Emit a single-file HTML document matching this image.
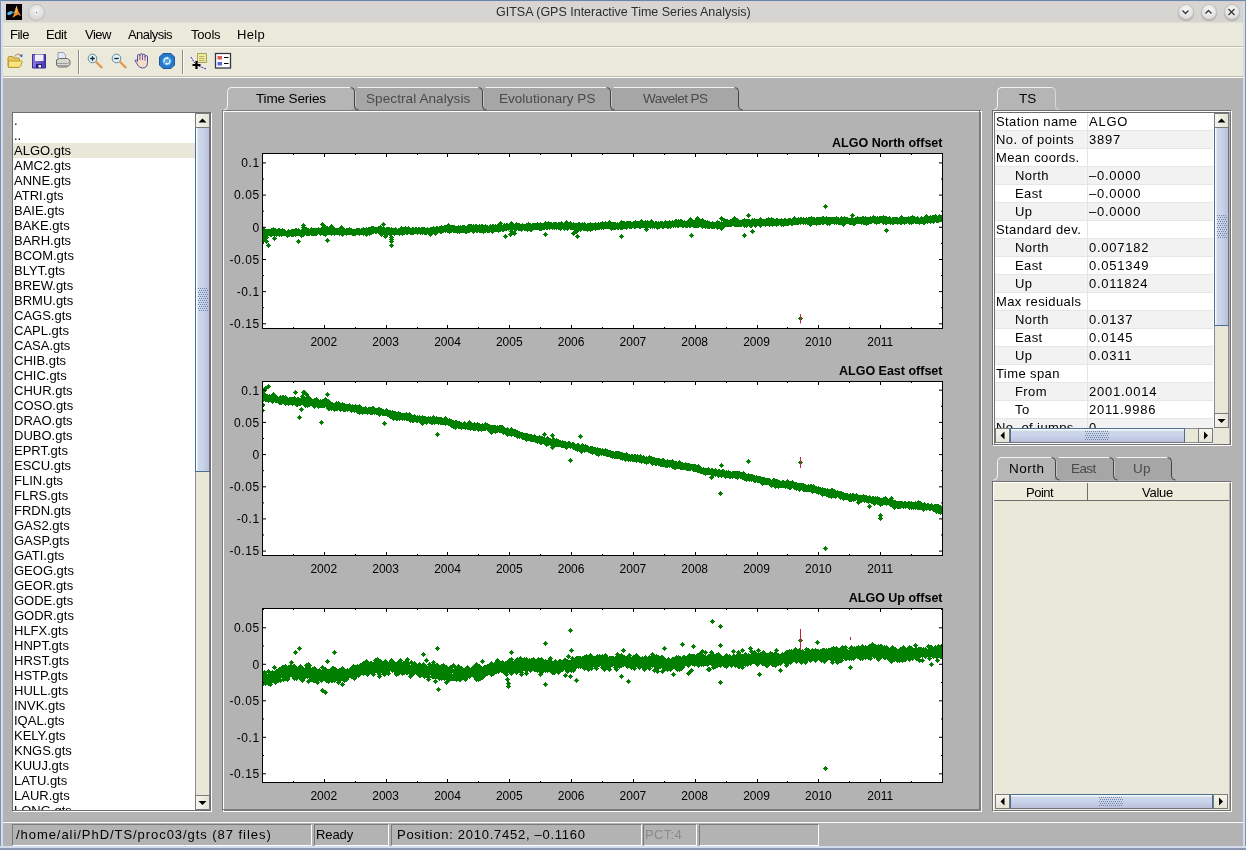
<!DOCTYPE html><html><head><meta charset="utf-8"><style>
*{margin:0;padding:0;box-sizing:border-box}
html,body{width:1246px;height:850px;overflow:hidden;background:#b3b3b3;font-family:"Liberation Sans", sans-serif}
.a{position:absolute}
.t{position:absolute;will-change:transform;white-space:pre;line-height:1;font-family:"Liberation Sans", sans-serif}
</style></head><body>

<div class="a" style="left:0;top:0;width:1246px;height:23px;background:linear-gradient(#6a87a8 0,#6a87a8 1px,#c4d2e4 1px,#dcd2cf 2px,#dcd4d0 4px,#d6d6d3 6px,#d4d3cf 21px,#e2e0d6 23px)"></div>
<div class="a" style="left:0;top:23px;width:1246px;height:55px;background:#eae9da"></div>
<div class="a" style="left:3px;top:46px;width:1240px;height:1px;background:#bebdaf"></div>
<div class="a" style="left:3px;top:47px;width:1240px;height:1px;background:#fbfaf0"></div>
<div class="a" style="left:3px;top:76px;width:1240px;height:1px;background:#bdbcb0"></div>
<div class="a" style="left:3px;top:77px;width:1240px;height:1px;background:#fdfdf8"></div>
<div class="a" style="left:0;top:0;width:1px;height:850px;background:#7e92b4"></div>
<div class="a" style="left:1px;top:1px;width:2px;height:849px;background:#d4dcec"></div>
<div class="a" style="left:1243px;top:1px;width:2px;height:849px;background:#d4dcec"></div>
<div class="a" style="left:1245px;top:0;width:1px;height:850px;background:#7e92b4"></div>
<div class="a" style="left:0;top:846px;width:1246px;height:2px;background:#d4dcec"></div>
<div class="a" style="left:0;top:848px;width:1246px;height:2px;background:#8a96b4"></div>
<svg class="a" style="left:6px;top:4px" width="16" height="16" viewBox="0 0 16 16">
<rect width="16" height="16" fill="#060208"/>
<defs><linearGradient id="mlg" x1="0" y1="0" x2="0" y2="1"><stop offset="0" stop-color="#ffd060"/><stop offset="0.5" stop-color="#f08028"/><stop offset="1" stop-color="#e8a030"/></linearGradient></defs>
<ellipse cx="4" cy="9" rx="3" ry="1.7" transform="rotate(-25 4 9)" fill="#58b0e8"/>
<path d="M5 9.5 L8.5 7 L9 9 Z" fill="#3a80a8"/>
<path d="M6.5 13.8 L8.5 8.5 L10.5 1.5 L12.5 7.5 L15 12 L12 10.5 Z" fill="url(#mlg)"/>
<path d="M8.5 8.5 L10.5 1.5 L11 9 Z" fill="#ffc848" opacity="0.7"/>
</svg>
<div class="a" style="left:29px;top:5px;width:15px;height:15px;border-radius:50%;background:radial-gradient(circle at 50% 35%,#f4f4f4,#d8d8d8 70%,#b8b8b8);box-shadow:0 0 0 1px #c0c0c0"></div>
<div class="a" style="left:36px;top:12px;width:1px;height:1px;background:#666"></div>
<div class="t" style="left:495.80px;top:5.62px;font-size:12.5px;color:#2e2e2e;letter-spacing:-0.009px;">GITSA (GPS Interactive Time Series Analysis)</div>
<div class="a" style="left:1178.5px;top:5px;width:14px;height:14px;border-radius:50%;background:radial-gradient(circle at 50% 35%,#fafafa,#e0e0e0 65%,#bdbdbd);box-shadow:0 0 0 1px #c4c4c4,0 1px 1px 1px #a8a8a8"></div>
<div class="a" style="left:1201.5px;top:5px;width:14px;height:14px;border-radius:50%;background:radial-gradient(circle at 50% 35%,#fafafa,#e0e0e0 65%,#bdbdbd);box-shadow:0 0 0 1px #c4c4c4,0 1px 1px 1px #a8a8a8"></div>
<div class="a" style="left:1224.5px;top:5px;width:14px;height:14px;border-radius:50%;background:radial-gradient(circle at 50% 35%,#fafafa,#e0e0e0 65%,#bdbdbd);box-shadow:0 0 0 1px #c4c4c4,0 1px 1px 1px #a8a8a8"></div>
<svg class="a" style="left:1178px;top:4px" width="62" height="16">
<path d="M4.5 6.5 L7.5 9.5 L10.5 6.5" stroke="#333" stroke-width="1.25" fill="none"/>
<path d="M27.5 9.5 L30.5 6.5 L33.5 9.5" stroke="#333" stroke-width="1.25" fill="none"/>
<path d="M50.5 5 L56.5 11 M56.5 5 L50.5 11" stroke="#333" stroke-width="1.25" fill="none"/>
</svg>
<div class="t" style="left:10.20px;top:28.00px;font-size:13px;color:#000;letter-spacing:-0.506px;">File</div>
<div class="t" style="left:45.60px;top:28.00px;font-size:13px;color:#000;letter-spacing:-0.396px;">Edit</div>
<div class="t" style="left:84.80px;top:28.00px;font-size:13px;color:#000;letter-spacing:-0.518px;">View</div>
<div class="t" style="left:128.30px;top:28.00px;font-size:13px;color:#000;letter-spacing:-0.558px;">Analysis</div>
<div class="t" style="left:191.30px;top:28.00px;font-size:13px;color:#000;letter-spacing:-0.187px;">Tools</div>
<div class="t" style="left:237.10px;top:28.00px;font-size:13px;color:#000;letter-spacing:0.298px;">Help</div>
<div class="a" style="left:78px;top:50px;width:1px;height:24px;background:#8d8c80"></div>
<div class="a" style="left:79px;top:50px;width:1px;height:24px;background:#fafaf0"></div>
<div class="a" style="left:182px;top:50px;width:1px;height:24px;background:#8d8c80"></div>
<div class="a" style="left:183px;top:50px;width:1px;height:24px;background:#fafaf0"></div>
<svg class="a" style="left:0;top:48px" width="240" height="26" viewBox="0 48 240 26">
<!-- open folder -->
<path d="M8 58 q0-1.5 1.5-1.5 h3 l1.5 1.5 h4 q1.5 0 1.5 1.5 v6.5 q0 1.5-1.5 1.5 h-8.5 q-1.5 0-1.5-1.5z" fill="#e8c858" stroke="#b49230" stroke-width="1"/>
<path d="M8.5 61 h13 q1 0 0.6 1 l-1.6 4.3 q-0.4 1-1.4 1 h-10.6z" fill="#f8e480" stroke="#b8982c" stroke-width="0.9"/>
<path d="M14.5 56.5 q2.5-3.5 6-1.8" fill="none" stroke="#d09080" stroke-width="1.2"/>
<path d="M22.5 54 l-0.3 3.5 l-3-1.8z" fill="#2a68b8"/>
<!-- floppy -->
<defs><linearGradient id="fpg" x1="0" x2="1"><stop offset="0" stop-color="#8a7ce0"/><stop offset="1" stop-color="#4838a8"/></linearGradient></defs>
<path d="M32.5 54.5 h13 v13.5 h-13z" fill="url(#fpg)" stroke="#3c2c98" stroke-width="1"/>
<path d="M35 54.5 h8.5 v6.5 h-8.5z" fill="#f0f0fa"/>
<path d="M36 64 h6 v4 h-6z" fill="#281c78"/>
<path d="M38.5 65 h2.5 v2.5 h-2.5z" fill="#f0f0ff"/>
<!-- printer -->
<path d="M58 52.5 h5.5 l2 2.5 v5 h-7.5z" fill="#e4e8f8" stroke="#9098b0" stroke-width="0.9"/>
<path d="M56.5 60 l3-1.5 h8 l2.5 2 v4 l-3 2.5 h-8.5 l-2-2z" fill="#d8d8d2" stroke="#6a6a6a" stroke-width="1"/>
<path d="M57 63.5 h10.5 l2-1.5 M57 65.5 h10.5" stroke="#8a8a8a" stroke-width="0.8" fill="none"/>
<!-- zoom in -->
<circle cx="92.5" cy="58.5" r="4.3" fill="#e4f2f8" stroke="#5a8aa0" stroke-width="1"/>
<path d="M90.2 58.5 h4.6 M92.5 56.2 v4.6" stroke="#102838" stroke-width="1.3"/>
<path d="M96.2 62 l5.3 5.3" stroke="#e09848" stroke-width="2.2" stroke-linecap="round"/>
<!-- zoom out -->
<circle cx="116.5" cy="58.5" r="4.3" fill="#e4f2f8" stroke="#5a8aa0" stroke-width="1"/>
<path d="M114.2 58.5 h4.6" stroke="#102838" stroke-width="1.3"/>
<path d="M120.2 62 l5.3 5.3" stroke="#e09848" stroke-width="2.2" stroke-linecap="round"/>
<!-- hand -->
<g transform="translate(134.5 52.5)">
<path d="M3 9 L3 3.2 Q3 2 4.2 2 Q5.4 2 5.4 3.2 L5.4 2.4 Q5.4 1.2 6.7 1.2 Q8 1.2 8 2.4 L8 2.7 Q8 1.6 9.2 1.6 Q10.5 1.6 10.5 2.8 L10.5 4.2 Q10.5 3.1 11.7 3.1 Q13 3.1 13 4.2 L13 10 Q13 15.5 8 15.5 Q5 15.5 3.6 13 L0.8 8.6 Q0.3 7.4 1.5 7.4 Q2.3 7.4 3 8.6 Z" fill="#f4dcc6" stroke="#4a3a9a" stroke-width="0.9"/>
<path d="M5.4 3.2 V7.5 M8 2.7 V7.5 M10.5 4.2 V8" stroke="#4a3a9a" stroke-width="0.8" fill="none"/>
</g>
<!-- rotate 3d -->
<path d="M163 53.5 h8 l3.5 3.5 v8 l-3.5 3.5 h-8 l-3.5 -3.5 v-8z" fill="#2878c8" stroke="#1858a0" stroke-width="1"/>
<circle cx="167" cy="61" r="4.6" fill="#48a0e8"/>
<path d="M164.3 62.5 a3 3 0 0 1 3.5-4.3 M169.7 59.5 a3 3 0 0 1 -3.5 4.3" fill="none" stroke="#f4faff" stroke-width="1.3"/>
<path d="M167 56.8 l2.2 1.6 l-2.4 1.2z M167 65.2 l-2.2-1.6 l2.4-1.2z" fill="#f4faff"/>
<!-- data cursor -->
<path d="M197.5 53.5 h9 v9 h-9z" fill="#f0ec98" stroke="#a8a060"/>
<path d="M199 56.5 h5.5 M199 58.5 h5.5 M199 60.5 h5.5" stroke="#a09860" stroke-width="0.7"/>
<path d="M191 57 l3 5 l3 3 l4 2 l5 2" fill="none" stroke="#3020c0" stroke-width="1" stroke-dasharray="2 1"/>
<path d="M196.5 61 v8 M192.5 65 h8" stroke="#000" stroke-width="2.2"/>
<!-- legend -->
<rect x="215.5" y="53.5" width="15" height="14.5" fill="#fff" stroke="#303848" stroke-width="1.3"/>
<rect x="217.5" y="56" width="4.5" height="3.5" fill="#e05858"/>
<rect x="217.5" y="62" width="4.5" height="3.5" fill="#5a68d8"/>
<path d="M224 57.5 h4.5 M224 63.5 h4.5" stroke="#000" stroke-width="1.2"/>
</svg>

<div class="a" style="left:12px;top:112px;width:200px;height:700px;background:#fff;border-top:1px solid #6e6e6e;border-left:1px solid #6e6e6e;border-right:1px solid #fff;border-bottom:1px solid #fff"></div>
<div class="a" style="left:210px;top:112px;width:1px;height:699px;background:#6e6e6e"></div>
<div class="a" style="left:12px;top:810px;width:199px;height:1px;background:#6e6e6e"></div>
<div class="a" style="left:13px;top:143px;width:182px;height:15px;background:#e8e7d8"></div>
<div class="a" style="left:13px;top:113px;width:182px;height:697px;overflow:hidden">
<div class="t" style="left:1px;top:1px;font-size:13px">.</div>
<div class="t" style="left:1px;top:16px;font-size:13px">..</div>
<div class="t" style="left:1px;top:31px;font-size:13px">ALGO.gts</div>
<div class="t" style="left:1px;top:46px;font-size:13px">AMC2.gts</div>
<div class="t" style="left:1px;top:61px;font-size:13px">ANNE.gts</div>
<div class="t" style="left:1px;top:76px;font-size:13px">ATRI.gts</div>
<div class="t" style="left:1px;top:91px;font-size:13px">BAIE.gts</div>
<div class="t" style="left:1px;top:106px;font-size:13px">BAKE.gts</div>
<div class="t" style="left:1px;top:121px;font-size:13px">BARH.gts</div>
<div class="t" style="left:1px;top:136px;font-size:13px">BCOM.gts</div>
<div class="t" style="left:1px;top:151px;font-size:13px">BLYT.gts</div>
<div class="t" style="left:1px;top:166px;font-size:13px">BREW.gts</div>
<div class="t" style="left:1px;top:181px;font-size:13px">BRMU.gts</div>
<div class="t" style="left:1px;top:196px;font-size:13px">CAGS.gts</div>
<div class="t" style="left:1px;top:211px;font-size:13px">CAPL.gts</div>
<div class="t" style="left:1px;top:226px;font-size:13px">CASA.gts</div>
<div class="t" style="left:1px;top:241px;font-size:13px">CHIB.gts</div>
<div class="t" style="left:1px;top:256px;font-size:13px">CHIC.gts</div>
<div class="t" style="left:1px;top:271px;font-size:13px">CHUR.gts</div>
<div class="t" style="left:1px;top:286px;font-size:13px">COSO.gts</div>
<div class="t" style="left:1px;top:301px;font-size:13px">DRAO.gts</div>
<div class="t" style="left:1px;top:316px;font-size:13px">DUBO.gts</div>
<div class="t" style="left:1px;top:331px;font-size:13px">EPRT.gts</div>
<div class="t" style="left:1px;top:346px;font-size:13px">ESCU.gts</div>
<div class="t" style="left:1px;top:361px;font-size:13px">FLIN.gts</div>
<div class="t" style="left:1px;top:376px;font-size:13px">FLRS.gts</div>
<div class="t" style="left:1px;top:391px;font-size:13px">FRDN.gts</div>
<div class="t" style="left:1px;top:406px;font-size:13px">GAS2.gts</div>
<div class="t" style="left:1px;top:421px;font-size:13px">GASP.gts</div>
<div class="t" style="left:1px;top:436px;font-size:13px">GATI.gts</div>
<div class="t" style="left:1px;top:451px;font-size:13px">GEOG.gts</div>
<div class="t" style="left:1px;top:466px;font-size:13px">GEOR.gts</div>
<div class="t" style="left:1px;top:481px;font-size:13px">GODE.gts</div>
<div class="t" style="left:1px;top:496px;font-size:13px">GODR.gts</div>
<div class="t" style="left:1px;top:511px;font-size:13px">HLFX.gts</div>
<div class="t" style="left:1px;top:526px;font-size:13px">HNPT.gts</div>
<div class="t" style="left:1px;top:541px;font-size:13px">HRST.gts</div>
<div class="t" style="left:1px;top:556px;font-size:13px">HSTP.gts</div>
<div class="t" style="left:1px;top:571px;font-size:13px">HULL.gts</div>
<div class="t" style="left:1px;top:586px;font-size:13px">INVK.gts</div>
<div class="t" style="left:1px;top:601px;font-size:13px">IQAL.gts</div>
<div class="t" style="left:1px;top:616px;font-size:13px">KELY.gts</div>
<div class="t" style="left:1px;top:631px;font-size:13px">KNGS.gts</div>
<div class="t" style="left:1px;top:646px;font-size:13px">KUUJ.gts</div>
<div class="t" style="left:1px;top:661px;font-size:13px">LATU.gts</div>
<div class="t" style="left:1px;top:676px;font-size:13px">LAUR.gts</div>
<div class="t" style="left:1px;top:691px;font-size:13px">LONG.gts</div>
</div>
<div class="a" style="left:195px;top:113px;width:15px;height:697px;background:#e8e7d8;border-left:1px solid #8c8c8c;border-right:1px solid #8c8c8c"></div>
<div class="a" style="left:195px;top:113px;width:15px;height:15px;background:linear-gradient(90deg,#f6f6ef,#e4e3d5);border:1px solid #7a7a7a"></div>
<svg class="a" style="left:195px;top:113px" width="15" height="15"><path d="M3.5 9.5 L7.5 5.5 L11.5 9.5Z" fill="#000"/></svg>
<div class="a" style="left:195px;top:795px;width:15px;height:15px;background:linear-gradient(90deg,#f6f6ef,#e4e3d5);border:1px solid #7a7a7a"></div>
<svg class="a" style="left:195px;top:795px" width="15" height="15"><path d="M3.5 6 L7.5 10 L11.5 6Z" fill="#000"/></svg>
<div class="a" style="left:195px;top:128px;width:15px;height:344px;background:linear-gradient(90deg,#f4faff 0,#f4faff 1px,#d0d8e4 2px,#c8d4ec 50%,#bcc0d8);border-left:1px solid #4a6e94;border-right:1px solid #6e7284;border-bottom:1px solid #4a6e94"></div>
<svg class="a" style="left:198px;top:288px" width="11" height="24"><rect x="0" y="0" width="1" height="1" fill="#6f86a8"/><rect x="2" y="0" width="1" height="1" fill="#6f86a8"/><rect x="4" y="0" width="1" height="1" fill="#6f86a8"/><rect x="6" y="0" width="1" height="1" fill="#6f86a8"/><rect x="8" y="0" width="1" height="1" fill="#6f86a8"/><rect x="1" y="2" width="1" height="1" fill="#6f86a8"/><rect x="3" y="2" width="1" height="1" fill="#6f86a8"/><rect x="5" y="2" width="1" height="1" fill="#6f86a8"/><rect x="7" y="2" width="1" height="1" fill="#6f86a8"/><rect x="9" y="2" width="1" height="1" fill="#6f86a8"/><rect x="0" y="4" width="1" height="1" fill="#6f86a8"/><rect x="2" y="4" width="1" height="1" fill="#6f86a8"/><rect x="4" y="4" width="1" height="1" fill="#6f86a8"/><rect x="6" y="4" width="1" height="1" fill="#6f86a8"/><rect x="8" y="4" width="1" height="1" fill="#6f86a8"/><rect x="1" y="6" width="1" height="1" fill="#6f86a8"/><rect x="3" y="6" width="1" height="1" fill="#6f86a8"/><rect x="5" y="6" width="1" height="1" fill="#6f86a8"/><rect x="7" y="6" width="1" height="1" fill="#6f86a8"/><rect x="9" y="6" width="1" height="1" fill="#6f86a8"/><rect x="0" y="8" width="1" height="1" fill="#6f86a8"/><rect x="2" y="8" width="1" height="1" fill="#6f86a8"/><rect x="4" y="8" width="1" height="1" fill="#6f86a8"/><rect x="6" y="8" width="1" height="1" fill="#6f86a8"/><rect x="8" y="8" width="1" height="1" fill="#6f86a8"/><rect x="1" y="10" width="1" height="1" fill="#6f86a8"/><rect x="3" y="10" width="1" height="1" fill="#6f86a8"/><rect x="5" y="10" width="1" height="1" fill="#6f86a8"/><rect x="7" y="10" width="1" height="1" fill="#6f86a8"/><rect x="9" y="10" width="1" height="1" fill="#6f86a8"/><rect x="0" y="12" width="1" height="1" fill="#6f86a8"/><rect x="2" y="12" width="1" height="1" fill="#6f86a8"/><rect x="4" y="12" width="1" height="1" fill="#6f86a8"/><rect x="6" y="12" width="1" height="1" fill="#6f86a8"/><rect x="8" y="12" width="1" height="1" fill="#6f86a8"/><rect x="1" y="14" width="1" height="1" fill="#6f86a8"/><rect x="3" y="14" width="1" height="1" fill="#6f86a8"/><rect x="5" y="14" width="1" height="1" fill="#6f86a8"/><rect x="7" y="14" width="1" height="1" fill="#6f86a8"/><rect x="9" y="14" width="1" height="1" fill="#6f86a8"/><rect x="0" y="16" width="1" height="1" fill="#6f86a8"/><rect x="2" y="16" width="1" height="1" fill="#6f86a8"/><rect x="4" y="16" width="1" height="1" fill="#6f86a8"/><rect x="6" y="16" width="1" height="1" fill="#6f86a8"/><rect x="8" y="16" width="1" height="1" fill="#6f86a8"/><rect x="1" y="18" width="1" height="1" fill="#6f86a8"/><rect x="3" y="18" width="1" height="1" fill="#6f86a8"/><rect x="5" y="18" width="1" height="1" fill="#6f86a8"/><rect x="7" y="18" width="1" height="1" fill="#6f86a8"/><rect x="9" y="18" width="1" height="1" fill="#6f86a8"/><rect x="0" y="20" width="1" height="1" fill="#6f86a8"/><rect x="2" y="20" width="1" height="1" fill="#6f86a8"/><rect x="4" y="20" width="1" height="1" fill="#6f86a8"/><rect x="6" y="20" width="1" height="1" fill="#6f86a8"/><rect x="8" y="20" width="1" height="1" fill="#6f86a8"/><rect x="1" y="22" width="1" height="1" fill="#6f86a8"/><rect x="3" y="22" width="1" height="1" fill="#6f86a8"/><rect x="5" y="22" width="1" height="1" fill="#6f86a8"/><rect x="7" y="22" width="1" height="1" fill="#6f86a8"/><rect x="9" y="22" width="1" height="1" fill="#6f86a8"/></svg>
<div class="a" style="left:222px;top:110px;width:759px;height:701px;border:1px solid #7a7a7a"></div>
<div class="a" style="left:223px;top:111px;width:759px;height:701px;border:1px solid #fff;border-right-color:#fff"></div>
<div class="a" style="left:223px;top:111px;width:757px;height:699px;border-right:1px solid #7a7a7a;border-bottom:1px solid #7a7a7a"></div>
<svg class="a" style="left:0;top:0;overflow:visible" width="1246" height="850">
<path d="M223 110 Q227 110 227 106 V91 Q227 87 231 87 H350 Q354 87 354 91 V106 Q354 110 358 110Z" fill="#b5b5b5"/>
<path d="M350 110 Q354 110 354 106 V91 Q354 87 358 87 H478 Q482 87 482 91 V106 Q482 110 486 110Z" fill="#a6a6a6"/>
<path d="M478 110 Q482 110 482 106 V91 Q482 87 486 87 H606 Q610 87 610 91 V106 Q610 110 614 110Z" fill="#a6a6a6"/>
<path d="M606 110 Q610 110 610 106 V91 Q610 87 614 87 H734 Q738 87 738 91 V106 Q738 110 742 110Z" fill="#a6a6a6"/>
<path d="M230.5 87.5 H351.5" stroke="#f2f2f2" fill="none"/>
<path d="M223.5 110 Q227.5 110 227.5 106 V91.5 Q227.5 87.5 231.5 87.5" stroke="#f4f4f4" fill="none"/>
<path d="M350.5 87.5 Q354.5 87.5 354.5 91.5 V106 Q354.5 110 358.5 110" stroke="#444" fill="none"/>
<path d="M357.5 87.5 H479.5" stroke="#f2f2f2" fill="none"/>
<path d="M355.5 91.5 V106" stroke="#c4c4c4" fill="none"/>
<path d="M478.5 87.5 Q482.5 87.5 482.5 91.5 V106 Q482.5 110 486.5 110" stroke="#444" fill="none"/>
<path d="M485.5 87.5 H607.5" stroke="#f2f2f2" fill="none"/>
<path d="M483.5 91.5 V106" stroke="#c4c4c4" fill="none"/>
<path d="M606.5 87.5 Q610.5 87.5 610.5 91.5 V106 Q610.5 110 614.5 110" stroke="#444" fill="none"/>
<path d="M613.5 87.5 H735.5" stroke="#f2f2f2" fill="none"/>
<path d="M611.5 91.5 V106" stroke="#c4c4c4" fill="none"/>
<path d="M734.5 87.5 Q738.5 87.5 738.5 91.5 V106 Q738.5 110 742.5 110" stroke="#444" fill="none"/>
</svg>
<div class="t" style="left:256.20px;top:91.97px;font-size:13.5px;color:#000;letter-spacing:-0.146px;">Time Series</div>
<div class="t" style="left:366.30px;top:91.97px;font-size:13.5px;color:#4a4a4a;letter-spacing:0.094px;">Spectral Analysis</div>
<div class="t" style="left:498.60px;top:91.97px;font-size:13.5px;color:#4a4a4a;letter-spacing:0.025px;">Evolutionary PS</div>
<div class="t" style="left:642.60px;top:91.97px;font-size:13.5px;color:#4a4a4a;letter-spacing:-0.558px;">Wavelet PS</div>
<svg class="a" style="left:0;top:0;will-change:transform" width="1246" height="850" font-family="Liberation Sans" font-size="12">
<rect x="262" y="153" width="680" height="175" fill="#fff"/>
<path d="M825 204h1v1h-1zM824 205h3v1h-3zM823 206h5v1h-5zM824 207h3v1h-3zM825 208h1v1h-1zM748 213h1v1h-1zM852 213h1v1h-1zM747 214h3v1h-3zM851 214h3v1h-3zM926 214h1v1h-1zM935 214h1v1h-1zM939 214h1v1h-1zM746 215h5v1h-5zM850 215h5v1h-5zM873 215h1v1h-1zM883 215h1v1h-1zM901 215h1v1h-1zM912 215h1v1h-1zM925 215h3v1h-3zM930 215h1v1h-1zM932 215h5v1h-5zM938 215h4v1h-4zM697 216h1v1h-1zM721 216h1v1h-1zM734 216h1v1h-1zM747 216h3v1h-3zM794 216h1v1h-1zM811 216h1v1h-1zM822 216h2v1h-2zM826 216h1v1h-1zM836 216h1v1h-1zM841 216h1v1h-1zM844 216h1v1h-1zM851 216h3v1h-3zM857 216h1v1h-1zM862 216h2v1h-2zM865 216h1v1h-1zM870 216h1v1h-1zM872 216h4v1h-4zM877 216h1v1h-1zM879 216h8v1h-8zM889 216h1v1h-1zM900 216h3v1h-3zM908 216h1v1h-1zM910 216h5v1h-5zM917 216h1v1h-1zM921 216h1v1h-1zM924 216h19v1h-19zM690 217h1v1h-1zM696 217h3v1h-3zM720 217h3v1h-3zM733 217h3v1h-3zM748 217h1v1h-1zM760 217h1v1h-1zM768 217h1v1h-1zM771 217h1v1h-1zM793 217h3v1h-3zM798 217h1v1h-1zM800 217h2v1h-2zM803 217h1v1h-1zM806 217h1v1h-1zM808 217h7v1h-7zM816 217h23v1h-23zM840 217h8v1h-8zM851 217h2v1h-2zM855 217h36v1h-36zM892 217h6v1h-6zM899 217h20v1h-20zM920 217h23v1h-23zM689 218h3v1h-3zM695 218h5v1h-5zM702 218h1v1h-1zM719 218h6v1h-6zM732 218h6v1h-6zM744 218h1v1h-1zM752 218h1v1h-1zM754 218h1v1h-1zM759 218h3v1h-3zM766 218h8v1h-8zM776 218h2v1h-2zM781 218h1v1h-1zM784 218h2v1h-2zM788 218h3v1h-3zM792 218h151v1h-151zM641 219h1v1h-1zM651 219h1v1h-1zM675 219h2v1h-2zM678 219h1v1h-1zM680 219h2v1h-2zM688 219h5v1h-5zM695 219h9v1h-9zM720 219h8v1h-8zM730 219h9v1h-9zM742 219h8v1h-8zM751 219h192v1h-192zM566 220h1v1h-1zM609 220h1v1h-1zM621 220h1v1h-1zM635 220h1v1h-1zM640 220h3v1h-3zM645 220h1v1h-1zM647 220h1v1h-1zM650 220h3v1h-3zM665 220h1v1h-1zM669 220h1v1h-1zM672 220h1v1h-1zM674 220h9v1h-9zM684 220h1v1h-1zM687 220h19v1h-19zM707 220h1v1h-1zM717 220h1v1h-1zM721 220h222v1h-222zM500 221h1v1h-1zM511 221h1v1h-1zM545 221h1v1h-1zM548 221h1v1h-1zM561 221h1v1h-1zM565 221h3v1h-3zM570 221h1v1h-1zM602 221h1v1h-1zM605 221h1v1h-1zM608 221h3v1h-3zM620 221h5v1h-5zM626 221h5v1h-5zM633 221h21v1h-21zM655 221h2v1h-2zM658 221h1v1h-1zM660 221h3v1h-3zM664 221h46v1h-46zM712 221h1v1h-1zM716 221h4v1h-4zM721 221h1v1h-1zM723 221h219v1h-219zM322 222h1v1h-1zM383 222h1v1h-1zM499 222h3v1h-3zM510 222h3v1h-3zM516 222h1v1h-1zM528 222h1v1h-1zM537 222h1v1h-1zM540 222h1v1h-1zM544 222h8v1h-8zM553 222h4v1h-4zM558 222h5v1h-5zM564 222h8v1h-8zM573 222h1v1h-1zM578 222h2v1h-2zM582 222h1v1h-1zM584 222h1v1h-1zM590 222h1v1h-1zM595 222h1v1h-1zM598 222h1v1h-1zM600 222h16v1h-16zM617 222h1v1h-1zM619 222h316v1h-316zM936 222h3v1h-3zM303 223h1v1h-1zM321 223h3v1h-3zM382 223h3v1h-3zM448 223h1v1h-1zM498 223h5v1h-5zM504 223h1v1h-1zM506 223h2v1h-2zM509 223h5v1h-5zM515 223h5v1h-5zM522 223h1v1h-1zM526 223h5v1h-5zM532 223h54v1h-54zM587 223h285v1h-285zM874 223h6v1h-6zM882 223h25v1h-25zM908 223h6v1h-6zM915 223h11v1h-11zM927 223h1v1h-1zM930 223h1v1h-1zM933 223h1v1h-1zM302 224h3v1h-3zM320 224h5v1h-5zM331 224h1v1h-1zM381 224h5v1h-5zM447 224h3v1h-3zM468 224h4v1h-4zM473 224h1v1h-1zM475 224h2v1h-2zM479 224h1v1h-1zM481 224h2v1h-2zM485 224h1v1h-1zM490 224h1v1h-1zM492 224h2v1h-2zM495 224h1v1h-1zM497 224h5v1h-5zM503 224h296v1h-296zM800 224h1v1h-1zM803 224h1v1h-1zM805 224h1v1h-1zM807 224h14v1h-14zM822 224h2v1h-2zM826 224h5v1h-5zM834 224h1v1h-1zM836 224h1v1h-1zM838 224h8v1h-8zM849 224h7v1h-7zM861 224h1v1h-1zM863 224h6v1h-6zM876 224h1v1h-1zM883 224h1v1h-1zM885 224h2v1h-2zM890 224h1v1h-1zM892 224h2v1h-2zM897 224h1v1h-1zM900 224h2v1h-2zM904 224h1v1h-1zM909 224h1v1h-1zM911 224h1v1h-1zM919 224h1v1h-1zM923 224h2v1h-2zM301 225h5v1h-5zM321 225h5v1h-5zM330 225h3v1h-3zM341 225h1v1h-1zM380 225h1v1h-1zM382 225h3v1h-3zM441 225h1v1h-1zM444 225h11v1h-11zM458 225h1v1h-1zM460 225h1v1h-1zM462 225h3v1h-3zM467 225h21v1h-21zM489 225h290v1h-290zM780 225h9v1h-9zM791 225h2v1h-2zM809 225h3v1h-3zM816 225h1v1h-1zM827 225h1v1h-1zM829 225h1v1h-1zM842 225h3v1h-3zM853 225h2v1h-2zM866 225h1v1h-1zM262 226h1v1h-1zM302 226h3v1h-3zM322 226h6v1h-6zM329 226h5v1h-5zM340 226h3v1h-3zM371 226h3v1h-3zM378 226h4v1h-4zM383 226h1v1h-1zM401 226h1v1h-1zM405 226h1v1h-1zM408 226h1v1h-1zM433 226h1v1h-1zM436 226h2v1h-2zM439 226h293v1h-293zM734 226h8v1h-8zM743 226h5v1h-5zM749 226h4v1h-4zM754 226h3v1h-3zM759 226h3v1h-3zM765 226h1v1h-1zM769 226h1v1h-1zM772 226h1v1h-1zM776 226h1v1h-1zM781 226h1v1h-1zM783 226h1v1h-1zM810 226h1v1h-1zM843 226h1v1h-1zM262 227h2v1h-2zM273 227h1v1h-1zM301 227h6v1h-6zM311 227h1v1h-1zM318 227h1v1h-1zM321 227h14v1h-14zM339 227h5v1h-5zM349 227h1v1h-1zM363 227h1v1h-1zM366 227h1v1h-1zM368 227h17v1h-17zM386 227h4v1h-4zM391 227h1v1h-1zM395 227h1v1h-1zM400 227h10v1h-10zM412 227h2v1h-2zM415 227h2v1h-2zM418 227h2v1h-2zM421 227h4v1h-4zM427 227h1v1h-1zM430 227h242v1h-242zM673 227h1v1h-1zM675 227h1v1h-1zM677 227h2v1h-2zM682 227h2v1h-2zM685 227h3v1h-3zM689 227h2v1h-2zM693 227h6v1h-6zM701 227h24v1h-24zM744 227h1v1h-1zM746 227h1v1h-1zM750 227h2v1h-2zM755 227h1v1h-1zM760 227h1v1h-1zM262 228h3v1h-3zM271 228h5v1h-5zM278 228h2v1h-2zM282 228h1v1h-1zM295 228h2v1h-2zM298 228h1v1h-1zM302 228h7v1h-7zM310 228h35v1h-35zM346 228h6v1h-6zM356 228h4v1h-4zM361 228h36v1h-36zM398 228h230v1h-230zM629 228h3v1h-3zM634 228h2v1h-2zM639 228h2v1h-2zM645 228h3v1h-3zM650 228h1v1h-1zM652 228h1v1h-1zM654 228h1v1h-1zM656 228h4v1h-4zM662 228h2v1h-2zM667 228h2v1h-2zM670 228h1v1h-1zM702 228h1v1h-1zM705 228h1v1h-1zM707 228h3v1h-3zM711 228h4v1h-4zM716 228h8v1h-8zM886 228h1v1h-1zM262 229h23v1h-23zM288 229h1v1h-1zM291 229h9v1h-9zM301 229h244v1h-244zM546 229h2v1h-2zM549 229h1v1h-1zM552 229h1v1h-1zM554 229h1v1h-1zM556 229h1v1h-1zM558 229h4v1h-4zM563 229h6v1h-6zM570 229h30v1h-30zM601 229h1v1h-1zM603 229h1v1h-1zM610 229h6v1h-6zM617 229h2v1h-2zM620 229h3v1h-3zM626 229h1v1h-1zM644 229h5v1h-5zM657 229h1v1h-1zM717 229h1v1h-1zM720 229h3v1h-3zM752 229h1v1h-1zM885 229h3v1h-3zM262 230h24v1h-24zM287 230h220v1h-220zM508 230h1v1h-1zM510 230h3v1h-3zM514 230h3v1h-3zM518 230h5v1h-5zM524 230h9v1h-9zM539 230h3v1h-3zM560 230h1v1h-1zM564 230h1v1h-1zM567 230h1v1h-1zM574 230h8v1h-8zM583 230h10v1h-10zM595 230h1v1h-1zM611 230h1v1h-1zM645 230h3v1h-3zM721 230h1v1h-1zM751 230h3v1h-3zM884 230h5v1h-5zM262 231h239v1h-239zM502 231h2v1h-2zM509 231h7v1h-7zM521 231h1v1h-1zM527 231h1v1h-1zM530 231h2v1h-2zM573 231h6v1h-6zM580 231h1v1h-1zM587 231h1v1h-1zM590 231h1v1h-1zM646 231h1v1h-1zM750 231h5v1h-5zM885 231h3v1h-3zM262 232h182v1h-182zM445 232h1v1h-1zM447 232h5v1h-5zM453 232h17v1h-17zM472 232h3v1h-3zM476 232h2v1h-2zM479 232h7v1h-7zM487 232h3v1h-3zM491 232h3v1h-3zM498 232h1v1h-1zM510 232h6v1h-6zM545 232h1v1h-1zM572 232h6v1h-6zM751 232h3v1h-3zM886 232h1v1h-1zM262 233h112v1h-112zM375 233h2v1h-2zM378 233h60v1h-60zM440 233h2v1h-2zM449 233h1v1h-1zM457 233h1v1h-1zM459 233h1v1h-1zM465 233h2v1h-2zM473 233h1v1h-1zM483 233h1v1h-1zM492 233h1v1h-1zM509 233h8v1h-8zM544 233h3v1h-3zM571 233h6v1h-6zM691 233h1v1h-1zM744 233h1v1h-1zM752 233h1v1h-1zM262 234h56v1h-56zM319 234h53v1h-53zM379 234h26v1h-26zM406 234h2v1h-2zM410 234h4v1h-4zM417 234h1v1h-1zM420 234h1v1h-1zM422 234h1v1h-1zM424 234h3v1h-3zM428 234h5v1h-5zM434 234h3v1h-3zM505 234h1v1h-1zM508 234h8v1h-8zM543 234h5v1h-5zM572 234h3v1h-3zM577 234h1v1h-1zM621 234h1v1h-1zM690 234h3v1h-3zM743 234h3v1h-3zM262 235h43v1h-43zM306 235h4v1h-4zM311 235h6v1h-6zM320 235h1v1h-1zM323 235h4v1h-4zM331 235h1v1h-1zM334 235h1v1h-1zM339 235h1v1h-1zM341 235h3v1h-3zM346 235h1v1h-1zM352 235h4v1h-4zM359 235h1v1h-1zM363 235h1v1h-1zM365 235h3v1h-3zM369 235h1v1h-1zM380 235h3v1h-3zM384 235h4v1h-4zM389 235h3v1h-3zM394 235h1v1h-1zM399 235h1v1h-1zM402 235h1v1h-1zM429 235h3v1h-3zM435 235h1v1h-1zM504 235h3v1h-3zM509 235h3v1h-3zM514 235h1v1h-1zM544 235h3v1h-3zM573 235h1v1h-1zM576 235h3v1h-3zM620 235h3v1h-3zM689 235h5v1h-5zM742 235h5v1h-5zM262 236h6v1h-6zM270 236h2v1h-2zM274 236h1v1h-1zM276 236h1v1h-1zM279 236h1v1h-1zM281 236h1v1h-1zM286 236h4v1h-4zM291 236h3v1h-3zM295 236h1v1h-1zM300 236h4v1h-4zM325 236h1v1h-1zM342 236h1v1h-1zM366 236h1v1h-1zM381 236h1v1h-1zM383 236h5v1h-5zM390 236h3v1h-3zM430 236h1v1h-1zM503 236h5v1h-5zM510 236h1v1h-1zM545 236h1v1h-1zM575 236h5v1h-5zM619 236h5v1h-5zM690 236h3v1h-3zM743 236h3v1h-3zM262 237h7v1h-7zM273 237h3v1h-3zM287 237h1v1h-1zM301 237h1v1h-1zM384 237h3v1h-3zM389 237h5v1h-5zM504 237h3v1h-3zM576 237h3v1h-3zM620 237h3v1h-3zM691 237h1v1h-1zM744 237h1v1h-1zM262 238h6v1h-6zM272 238h5v1h-5zM327 238h1v1h-1zM385 238h1v1h-1zM390 238h3v1h-3zM505 238h1v1h-1zM577 238h1v1h-1zM621 238h1v1h-1zM262 239h5v1h-5zM273 239h3v1h-3zM298 239h1v1h-1zM326 239h3v1h-3zM389 239h5v1h-5zM262 240h6v1h-6zM274 240h1v1h-1zM297 240h3v1h-3zM325 240h5v1h-5zM390 240h3v1h-3zM262 241h7v1h-7zM296 241h5v1h-5zM326 241h3v1h-3zM389 241h5v1h-5zM263 242h1v1h-1zM265 242h3v1h-3zM297 242h3v1h-3zM327 242h1v1h-1zM390 242h3v1h-3zM266 243h1v1h-1zM268 243h1v1h-1zM298 243h1v1h-1zM391 243h1v1h-1zM267 244h3v1h-3zM390 244h3v1h-3zM266 245h5v1h-5zM389 245h5v1h-5zM267 246h3v1h-3zM390 246h3v1h-3zM268 247h1v1h-1zM391 247h1v1h-1zM800 316h1v1h-1zM799 317h3v1h-3zM798 318h5v1h-5zM799 319h3v1h-3zM800 320h1v1h-1z" fill="#007f00" shape-rendering="crispEdges"/>
<path d="M800.5 314v9.5" stroke="#c8203c" stroke-width="1"/>
<rect x="262" y="381" width="680" height="174" fill="#fff"/>
<path d="M268 384h1v1h-1zM267 385h3v1h-3zM265 386h6v1h-6zM264 387h6v1h-6zM263 388h6v1h-6zM263 389h4v1h-4zM262 390h5v1h-5zM295 390h1v1h-1zM303 390h2v1h-2zM263 391h3v1h-3zM294 391h3v1h-3zM302 391h4v1h-4zM262 392h3v1h-3zM273 392h1v1h-1zM293 392h5v1h-5zM301 392h6v1h-6zM327 392h1v1h-1zM262 393h4v1h-4zM272 393h3v1h-3zM294 393h3v1h-3zM302 393h6v1h-6zM326 393h3v1h-3zM262 394h6v1h-6zM269 394h1v1h-1zM271 394h5v1h-5zM295 394h1v1h-1zM302 394h7v1h-7zM325 394h5v1h-5zM262 395h15v1h-15zM280 395h1v1h-1zM282 395h2v1h-2zM285 395h1v1h-1zM301 395h3v1h-3zM305 395h4v1h-4zM326 395h3v1h-3zM262 396h16v1h-16zM279 396h8v1h-8zM294 396h1v1h-1zM300 396h5v1h-5zM306 396h4v1h-4zM327 396h1v1h-1zM262 397h26v1h-26zM289 397h7v1h-7zM297 397h2v1h-2zM301 397h10v1h-10zM316 397h1v1h-1zM325 397h1v1h-1zM262 398h50v1h-50zM314 398h4v1h-4zM324 398h3v1h-3zM262 399h57v1h-57zM320 399h1v1h-1zM322 399h7v1h-7zM262 400h68v1h-68zM262 401h2v1h-2zM265 401h66v1h-66zM336 401h1v1h-1zM338 401h1v1h-1zM262 402h1v1h-1zM268 402h1v1h-1zM271 402h3v1h-3zM275 402h58v1h-58zM335 402h5v1h-5zM342 402h1v1h-1zM262 403h2v1h-2zM272 403h1v1h-1zM278 403h67v1h-67zM349 403h1v1h-1zM262 404h3v1h-3zM279 404h3v1h-3zM284 404h67v1h-67zM352 404h1v1h-1zM355 404h1v1h-1zM359 404h1v1h-1zM262 405h3v1h-3zM285 405h1v1h-1zM288 405h1v1h-1zM292 405h1v1h-1zM295 405h6v1h-6zM303 405h58v1h-58zM262 406h2v1h-2zM296 406h2v1h-2zM304 406h6v1h-6zM312 406h50v1h-50zM365 406h1v1h-1zM372 406h2v1h-2zM262 407h1v1h-1zM301 407h1v1h-1zM305 407h1v1h-1zM307 407h1v1h-1zM313 407h3v1h-3zM317 407h8v1h-8zM326 407h41v1h-41zM368 407h7v1h-7zM378 407h2v1h-2zM262 408h1v1h-1zM300 408h3v1h-3zM314 408h1v1h-1zM318 408h1v1h-1zM326 408h56v1h-56zM386 408h1v1h-1zM262 409h2v1h-2zM299 409h5v1h-5zM327 409h57v1h-57zM385 409h3v1h-3zM262 410h3v1h-3zM300 410h3v1h-3zM328 410h2v1h-2zM331 410h1v1h-1zM333 410h5v1h-5zM339 410h52v1h-52zM392 410h1v1h-1zM262 411h2v1h-2zM301 411h1v1h-1zM334 411h1v1h-1zM340 411h1v1h-1zM343 411h3v1h-3zM347 411h1v1h-1zM350 411h46v1h-46zM398 411h1v1h-1zM262 412h1v1h-1zM351 412h1v1h-1zM354 412h1v1h-1zM356 412h45v1h-45zM406 412h1v1h-1zM409 412h1v1h-1zM357 413h54v1h-54zM359 414h1v1h-1zM362 414h1v1h-1zM367 414h1v1h-1zM370 414h3v1h-3zM374 414h1v1h-1zM376 414h36v1h-36zM414 414h1v1h-1zM299 415h1v1h-1zM378 415h3v1h-3zM382 415h34v1h-34zM417 415h1v1h-1zM419 415h1v1h-1zM422 415h1v1h-1zM433 415h1v1h-1zM298 416h3v1h-3zM379 416h1v1h-1zM387 416h39v1h-39zM428 416h1v1h-1zM430 416h1v1h-1zM432 416h3v1h-3zM436 416h1v1h-1zM445 416h1v1h-1zM297 417h5v1h-5zM389 417h53v1h-53zM444 417h3v1h-3zM298 418h3v1h-3zM390 418h58v1h-58zM449 418h1v1h-1zM299 419h1v1h-1zM392 419h60v1h-60zM321 420h1v1h-1zM393 420h1v1h-1zM396 420h2v1h-2zM399 420h1v1h-1zM402 420h1v1h-1zM404 420h1v1h-1zM406 420h48v1h-48zM455 420h2v1h-2zM469 420h1v1h-1zM320 421h3v1h-3zM384 421h1v1h-1zM409 421h51v1h-51zM464 421h1v1h-1zM468 421h3v1h-3zM319 422h5v1h-5zM383 422h3v1h-3zM410 422h1v1h-1zM412 422h2v1h-2zM416 422h2v1h-2zM419 422h43v1h-43zM463 422h3v1h-3zM467 422h5v1h-5zM474 422h1v1h-1zM477 422h1v1h-1zM485 422h1v1h-1zM320 423h3v1h-3zM382 423h5v1h-5zM420 423h8v1h-8zM429 423h51v1h-51zM482 423h1v1h-1zM484 423h4v1h-4zM321 424h1v1h-1zM383 424h3v1h-3zM421 424h3v1h-3zM426 424h1v1h-1zM431 424h2v1h-2zM434 424h1v1h-1zM438 424h1v1h-1zM440 424h50v1h-50zM384 425h1v1h-1zM422 425h1v1h-1zM445 425h1v1h-1zM448 425h48v1h-48zM497 425h1v1h-1zM499 425h4v1h-4zM450 426h54v1h-54zM451 427h54v1h-54zM507 427h1v1h-1zM511 427h1v1h-1zM453 428h4v1h-4zM458 428h51v1h-51zM510 428h3v1h-3zM455 429h1v1h-1zM461 429h1v1h-1zM465 429h1v1h-1zM467 429h49v1h-49zM470 430h1v1h-1zM473 430h3v1h-3zM477 430h9v1h-9zM487 430h31v1h-31zM478 431h1v1h-1zM481 431h1v1h-1zM488 431h32v1h-32zM437 432h1v1h-1zM489 432h9v1h-9zM499 432h24v1h-24zM544 432h1v1h-1zM436 433h3v1h-3zM490 433h3v1h-3zM495 433h1v1h-1zM502 433h26v1h-26zM543 433h3v1h-3zM552 433h1v1h-1zM435 434h5v1h-5zM491 434h1v1h-1zM503 434h1v1h-1zM505 434h27v1h-27zM534 434h1v1h-1zM542 434h5v1h-5zM551 434h3v1h-3zM580 434h1v1h-1zM436 435h3v1h-3zM506 435h30v1h-30zM539 435h1v1h-1zM543 435h3v1h-3zM550 435h5v1h-5zM579 435h3v1h-3zM437 436h1v1h-1zM507 436h1v1h-1zM511 436h1v1h-1zM514 436h29v1h-29zM544 436h1v1h-1zM547 436h1v1h-1zM551 436h3v1h-3zM578 436h5v1h-5zM516 437h29v1h-29zM546 437h3v1h-3zM552 437h2v1h-2zM579 437h3v1h-3zM517 438h1v1h-1zM519 438h1v1h-1zM521 438h30v1h-30zM552 438h3v1h-3zM556 438h1v1h-1zM580 438h1v1h-1zM522 439h37v1h-37zM525 440h36v1h-36zM562 440h1v1h-1zM526 441h1v1h-1zM530 441h36v1h-36zM568 441h2v1h-2zM535 442h36v1h-36zM572 442h2v1h-2zM537 443h1v1h-1zM539 443h36v1h-36zM577 443h2v1h-2zM582 443h1v1h-1zM540 444h2v1h-2zM544 444h36v1h-36zM581 444h3v1h-3zM585 444h1v1h-1zM545 445h4v1h-4zM550 445h38v1h-38zM546 446h1v1h-1zM551 446h38v1h-38zM590 446h3v1h-3zM550 447h5v1h-5zM561 447h35v1h-35zM597 447h1v1h-1zM551 448h3v1h-3zM565 448h3v1h-3zM570 448h1v1h-1zM572 448h29v1h-29zM602 448h1v1h-1zM605 448h1v1h-1zM552 449h1v1h-1zM566 449h1v1h-1zM573 449h35v1h-35zM575 450h36v1h-36zM577 451h1v1h-1zM579 451h35v1h-35zM615 451h5v1h-5zM580 452h3v1h-3zM584 452h1v1h-1zM588 452h35v1h-35zM626 452h1v1h-1zM581 453h1v1h-1zM590 453h38v1h-38zM592 454h1v1h-1zM595 454h35v1h-35zM631 454h2v1h-2zM634 454h2v1h-2zM637 454h1v1h-1zM640 454h1v1h-1zM596 455h4v1h-4zM601 455h1v1h-1zM603 455h39v1h-39zM643 455h1v1h-1zM649 455h1v1h-1zM598 456h1v1h-1zM606 456h39v1h-39zM646 456h1v1h-1zM648 456h4v1h-4zM610 457h45v1h-45zM570 458h1v1h-1zM612 458h1v1h-1zM614 458h46v1h-46zM662 458h2v1h-2zM569 459h3v1h-3zM620 459h45v1h-45zM667 459h1v1h-1zM672 459h1v1h-1zM748 459h1v1h-1zM568 460h5v1h-5zM622 460h1v1h-1zM624 460h50v1h-50zM679 460h1v1h-1zM747 460h3v1h-3zM800 460h1v1h-1zM569 461h3v1h-3zM625 461h1v1h-1zM628 461h1v1h-1zM630 461h1v1h-1zM632 461h45v1h-45zM678 461h3v1h-3zM746 461h5v1h-5zM799 461h3v1h-3zM570 462h1v1h-1zM636 462h1v1h-1zM639 462h44v1h-44zM685 462h1v1h-1zM747 462h3v1h-3zM798 462h5v1h-5zM641 463h1v1h-1zM644 463h5v1h-5zM650 463h40v1h-40zM721 463h1v1h-1zM748 463h1v1h-1zM799 463h3v1h-3zM646 464h1v1h-1zM651 464h45v1h-45zM698 464h1v1h-1zM720 464h3v1h-3zM800 464h1v1h-1zM652 465h1v1h-1zM655 465h2v1h-2zM658 465h42v1h-42zM719 465h5v1h-5zM660 466h41v1h-41zM720 466h3v1h-3zM665 467h3v1h-3zM669 467h1v1h-1zM671 467h31v1h-31zM703 467h1v1h-1zM708 467h1v1h-1zM721 467h1v1h-1zM672 468h38v1h-38zM711 468h2v1h-2zM715 468h1v1h-1zM674 469h2v1h-2zM680 469h37v1h-37zM718 469h2v1h-2zM722 469h2v1h-2zM686 470h5v1h-5zM692 470h33v1h-33zM726 470h1v1h-1zM728 470h1v1h-1zM693 471h38v1h-38zM732 471h8v1h-8zM743 471h1v1h-1zM697 472h48v1h-48zM700 473h46v1h-46zM748 473h1v1h-1zM703 474h50v1h-50zM705 475h1v1h-1zM711 475h44v1h-44zM756 475h1v1h-1zM710 476h4v1h-4zM715 476h1v1h-1zM717 476h44v1h-44zM709 477h5v1h-5zM718 477h1v1h-1zM721 477h1v1h-1zM724 477h41v1h-41zM710 478h3v1h-3zM725 478h1v1h-1zM729 478h2v1h-2zM732 478h1v1h-1zM735 478h4v1h-4zM740 478h30v1h-30zM773 478h2v1h-2zM711 479h1v1h-1zM737 479h1v1h-1zM742 479h29v1h-29zM772 479h6v1h-6zM787 479h1v1h-1zM744 480h36v1h-36zM782 480h2v1h-2zM786 480h3v1h-3zM792 480h1v1h-1zM746 481h1v1h-1zM749 481h1v1h-1zM751 481h1v1h-1zM753 481h41v1h-41zM754 482h2v1h-2zM757 482h40v1h-40zM760 483h44v1h-44zM761 484h45v1h-45zM808 484h1v1h-1zM810 484h2v1h-2zM813 484h1v1h-1zM762 485h1v1h-1zM769 485h46v1h-46zM770 486h47v1h-47zM818 486h1v1h-1zM771 487h1v1h-1zM774 487h47v1h-47zM822 487h1v1h-1zM775 488h1v1h-1zM778 488h1v1h-1zM785 488h1v1h-1zM787 488h5v1h-5zM793 488h33v1h-33zM827 488h1v1h-1zM831 488h2v1h-2zM789 489h2v1h-2zM794 489h41v1h-41zM796 490h1v1h-1zM798 490h3v1h-3zM802 490h34v1h-34zM837 490h1v1h-1zM720 491h1v1h-1zM799 491h1v1h-1zM803 491h39v1h-39zM719 492h3v1h-3zM811 492h33v1h-33zM718 493h5v1h-5zM812 493h1v1h-1zM816 493h32v1h-32zM850 493h1v1h-1zM852 493h2v1h-2zM856 493h1v1h-1zM719 494h3v1h-3zM818 494h1v1h-1zM820 494h38v1h-38zM863 494h1v1h-1zM720 495h1v1h-1zM821 495h46v1h-46zM869 495h1v1h-1zM822 496h1v1h-1zM826 496h45v1h-45zM872 496h2v1h-2zM875 496h1v1h-1zM877 496h1v1h-1zM885 496h1v1h-1zM891 496h1v1h-1zM828 497h9v1h-9zM838 497h42v1h-42zM883 497h4v1h-4zM890 497h3v1h-3zM831 498h1v1h-1zM835 498h1v1h-1zM839 498h49v1h-49zM889 498h5v1h-5zM840 499h1v1h-1zM842 499h51v1h-51zM843 500h1v1h-1zM848 500h8v1h-8zM857 500h39v1h-39zM918 500h1v1h-1zM849 501h3v1h-3zM853 501h1v1h-1zM857 501h46v1h-46zM904 501h2v1h-2zM908 501h2v1h-2zM911 501h1v1h-1zM915 501h1v1h-1zM917 501h4v1h-4zM856 502h6v1h-6zM864 502h1v1h-1zM866 502h56v1h-56zM924 502h1v1h-1zM857 503h3v1h-3zM868 503h1v1h-1zM871 503h55v1h-55zM927 503h2v1h-2zM931 503h1v1h-1zM858 504h1v1h-1zM869 504h1v1h-1zM873 504h3v1h-3zM877 504h56v1h-56zM934 504h5v1h-5zM868 505h3v1h-3zM874 505h1v1h-1zM879 505h4v1h-4zM886 505h1v1h-1zM889 505h52v1h-52zM867 506h5v1h-5zM880 506h1v1h-1zM890 506h52v1h-52zM868 507h3v1h-3zM892 507h51v1h-51zM869 508h1v1h-1zM893 508h3v1h-3zM897 508h4v1h-4zM903 508h1v1h-1zM905 508h1v1h-1zM908 508h35v1h-35zM894 509h1v1h-1zM909 509h1v1h-1zM911 509h1v1h-1zM913 509h1v1h-1zM915 509h1v1h-1zM917 509h26v1h-26zM922 510h3v1h-3zM926 510h1v1h-1zM929 510h2v1h-2zM932 510h11v1h-11zM923 511h1v1h-1zM933 511h10v1h-10zM935 512h8v1h-8zM880 513h1v1h-1zM936 513h1v1h-1zM938 513h4v1h-4zM879 514h3v1h-3zM940 514h1v1h-1zM878 515h5v1h-5zM879 516h3v1h-3zM879 517h3v1h-3zM878 518h5v1h-5zM879 519h3v1h-3zM880 520h1v1h-1zM825 546h1v1h-1zM824 547h3v1h-3zM823 548h5v1h-5zM824 549h3v1h-3zM825 550h1v1h-1z" fill="#007f00" shape-rendering="crispEdges"/>
<path d="M800.5 457v11" stroke="#c8203c" stroke-width="1"/>
<rect x="262" y="608" width="680" height="174" fill="#fff"/>
<path d="M712 619h1v1h-1zM711 620h3v1h-3zM710 621h5v1h-5zM711 622h3v1h-3zM712 623h1v1h-1zM720 624h1v1h-1zM719 625h3v1h-3zM718 626h5v1h-5zM719 627h3v1h-3zM570 628h1v1h-1zM720 628h1v1h-1zM569 629h3v1h-3zM568 630h5v1h-5zM569 631h3v1h-3zM570 632h1v1h-1zM800 638h1v1h-1zM799 639h3v1h-3zM798 640h5v1h-5zM817 640h1v1h-1zM545 641h1v1h-1zM799 641h3v1h-3zM816 641h3v1h-3zM544 642h3v1h-3zM682 642h1v1h-1zM800 642h1v1h-1zM815 642h5v1h-5zM872 642h1v1h-1zM543 643h5v1h-5zM681 643h3v1h-3zM720 643h1v1h-1zM816 643h3v1h-3zM871 643h3v1h-3zM915 643h1v1h-1zM544 644h3v1h-3zM680 644h5v1h-5zM693 644h1v1h-1zM719 644h3v1h-3zM817 644h1v1h-1zM862 644h1v1h-1zM869 644h7v1h-7zM878 644h1v1h-1zM880 644h2v1h-2zM914 644h3v1h-3zM928 644h1v1h-1zM938 644h1v1h-1zM941 644h1v1h-1zM545 645h1v1h-1zM681 645h3v1h-3zM692 645h3v1h-3zM718 645h5v1h-5zM842 645h1v1h-1zM845 645h1v1h-1zM851 645h1v1h-1zM858 645h1v1h-1zM861 645h3v1h-3zM865 645h1v1h-1zM868 645h15v1h-15zM884 645h1v1h-1zM886 645h1v1h-1zM892 645h1v1h-1zM903 645h1v1h-1zM909 645h1v1h-1zM913 645h5v1h-5zM927 645h5v1h-5zM935 645h1v1h-1zM937 645h6v1h-6zM299 646h1v1h-1zM437 646h1v1h-1zM664 646h1v1h-1zM682 646h1v1h-1zM691 646h5v1h-5zM719 646h3v1h-3zM750 646h1v1h-1zM833 646h1v1h-1zM836 646h1v1h-1zM841 646h6v1h-6zM850 646h3v1h-3zM854 646h1v1h-1zM856 646h32v1h-32zM891 646h3v1h-3zM902 646h3v1h-3zM908 646h4v1h-4zM914 646h3v1h-3zM926 646h7v1h-7zM934 646h9v1h-9zM298 647h3v1h-3zM436 647h3v1h-3zM663 647h3v1h-3zM692 647h3v1h-3zM720 647h1v1h-1zM749 647h3v1h-3zM795 647h1v1h-1zM806 647h1v1h-1zM831 647h7v1h-7zM840 647h8v1h-8zM849 647h40v1h-40zM890 647h6v1h-6zM900 647h6v1h-6zM907 647h6v1h-6zM915 647h2v1h-2zM918 647h4v1h-4zM923 647h1v1h-1zM925 647h1v1h-1zM927 647h16v1h-16zM297 648h5v1h-5zM435 648h5v1h-5zM571 648h1v1h-1zM623 648h1v1h-1zM662 648h5v1h-5zM693 648h1v1h-1zM742 648h1v1h-1zM748 648h5v1h-5zM758 648h1v1h-1zM776 648h1v1h-1zM794 648h3v1h-3zM799 648h1v1h-1zM805 648h4v1h-4zM812 648h1v1h-1zM815 648h1v1h-1zM822 648h3v1h-3zM826 648h1v1h-1zM828 648h19v1h-19zM848 648h49v1h-49zM899 648h28v1h-28zM928 648h14v1h-14zM298 649h3v1h-3zM436 649h3v1h-3zM570 649h3v1h-3zM622 649h3v1h-3zM663 649h3v1h-3zM702 649h1v1h-1zM733 649h1v1h-1zM741 649h3v1h-3zM749 649h3v1h-3zM757 649h3v1h-3zM775 649h3v1h-3zM789 649h1v1h-1zM791 649h1v1h-1zM793 649h8v1h-8zM802 649h1v1h-1zM804 649h6v1h-6zM811 649h8v1h-8zM820 649h28v1h-28zM849 649h94v1h-94zM295 650h1v1h-1zM299 650h1v1h-1zM334 650h1v1h-1zM437 650h1v1h-1zM511 650h1v1h-1zM569 650h5v1h-5zM621 650h5v1h-5zM664 650h1v1h-1zM701 650h3v1h-3zM705 650h1v1h-1zM711 650h1v1h-1zM732 650h3v1h-3zM738 650h1v1h-1zM740 650h5v1h-5zM750 650h3v1h-3zM754 650h1v1h-1zM756 650h5v1h-5zM763 650h1v1h-1zM774 650h5v1h-5zM786 650h18v1h-18zM805 650h138v1h-138zM294 651h3v1h-3zM333 651h3v1h-3zM510 651h3v1h-3zM570 651h3v1h-3zM622 651h3v1h-3zM700 651h7v1h-7zM710 651h3v1h-3zM731 651h5v1h-5zM737 651h3v1h-3zM741 651h3v1h-3zM749 651h7v1h-7zM757 651h3v1h-3zM762 651h3v1h-3zM770 651h1v1h-1zM775 651h3v1h-3zM785 651h158v1h-158zM293 652h5v1h-5zM332 652h5v1h-5zM423 652h1v1h-1zM509 652h5v1h-5zM571 652h1v1h-1zM617 652h1v1h-1zM623 652h1v1h-1zM652 652h1v1h-1zM699 652h9v1h-9zM709 652h5v1h-5zM718 652h1v1h-1zM732 652h3v1h-3zM736 652h5v1h-5zM742 652h1v1h-1zM745 652h1v1h-1zM750 652h7v1h-7zM758 652h1v1h-1zM760 652h6v1h-6zM769 652h4v1h-4zM774 652h3v1h-3zM782 652h1v1h-1zM784 652h159v1h-159zM294 653h3v1h-3zM333 653h3v1h-3zM422 653h3v1h-3zM510 653h3v1h-3zM590 653h1v1h-1zM605 653h1v1h-1zM616 653h3v1h-3zM621 653h1v1h-1zM629 653h1v1h-1zM636 653h1v1h-1zM651 653h3v1h-3zM689 653h1v1h-1zM697 653h6v1h-6zM704 653h3v1h-3zM710 653h4v1h-4zM716 653h4v1h-4zM726 653h1v1h-1zM733 653h1v1h-1zM737 653h4v1h-4zM744 653h3v1h-3zM748 653h1v1h-1zM751 653h28v1h-28zM781 653h162v1h-162zM295 654h1v1h-1zM334 654h1v1h-1zM421 654h5v1h-5zM511 654h1v1h-1zM568 654h1v1h-1zM586 654h1v1h-1zM589 654h3v1h-3zM597 654h1v1h-1zM599 654h1v1h-1zM602 654h1v1h-1zM604 654h3v1h-3zM615 654h8v1h-8zM628 654h3v1h-3zM635 654h3v1h-3zM650 654h5v1h-5zM656 654h1v1h-1zM688 654h7v1h-7zM696 654h8v1h-8zM705 654h1v1h-1zM708 654h13v1h-13zM725 654h3v1h-3zM729 654h1v1h-1zM733 654h2v1h-2zM736 654h207v1h-207zM422 655h3v1h-3zM567 655h3v1h-3zM584 655h9v1h-9zM596 655h12v1h-12zM616 655h9v1h-9zM627 655h5v1h-5zM633 655h6v1h-6zM645 655h1v1h-1zM649 655h1v1h-1zM651 655h8v1h-8zM661 655h2v1h-2zM676 655h1v1h-1zM678 655h1v1h-1zM683 655h2v1h-2zM687 655h19v1h-19zM707 655h15v1h-15zM724 655h7v1h-7zM732 655h211v1h-211zM423 656h1v1h-1zM520 656h1v1h-1zM550 656h1v1h-1zM566 656h5v1h-5zM572 656h1v1h-1zM576 656h5v1h-5zM582 656h26v1h-26zM609 656h5v1h-5zM615 656h16v1h-16zM632 656h8v1h-8zM642 656h1v1h-1zM644 656h3v1h-3zM648 656h16v1h-16zM675 656h6v1h-6zM682 656h261v1h-261zM377 657h1v1h-1zM407 657h1v1h-1zM511 657h1v1h-1zM517 657h1v1h-1zM519 657h3v1h-3zM524 657h1v1h-1zM526 657h1v1h-1zM533 657h1v1h-1zM538 657h1v1h-1zM541 657h1v1h-1zM549 657h3v1h-3zM567 657h3v1h-3zM571 657h3v1h-3zM575 657h90v1h-90zM668 657h1v1h-1zM672 657h200v1h-200zM873 657h48v1h-48zM922 657h1v1h-1zM924 657h3v1h-3zM928 657h3v1h-3zM932 657h11v1h-11zM375 658h4v1h-4zM391 658h1v1h-1zM400 658h1v1h-1zM406 658h3v1h-3zM426 658h1v1h-1zM497 658h1v1h-1zM509 658h4v1h-4zM516 658h12v1h-12zM529 658h1v1h-1zM531 658h4v1h-4zM537 658h6v1h-6zM548 658h5v1h-5zM564 658h2v1h-2zM568 658h1v1h-1zM570 658h96v1h-96zM667 658h3v1h-3zM671 658h185v1h-185zM857 658h16v1h-16zM874 658h1v1h-1zM876 658h6v1h-6zM883 658h37v1h-37zM922 658h1v1h-1zM925 658h1v1h-1zM927 658h5v1h-5zM933 658h1v1h-1zM936 658h2v1h-2zM940 658h2v1h-2zM327 659h1v1h-1zM366 659h1v1h-1zM374 659h7v1h-7zM385 659h1v1h-1zM390 659h3v1h-3zM399 659h3v1h-3zM405 659h5v1h-5zM425 659h3v1h-3zM482 659h1v1h-1zM496 659h3v1h-3zM508 659h6v1h-6zM515 659h29v1h-29zM545 659h1v1h-1zM548 659h4v1h-4zM555 659h1v1h-1zM559 659h2v1h-2zM563 659h5v1h-5zM571 659h272v1h-272zM844 659h11v1h-11zM859 659h5v1h-5zM865 659h1v1h-1zM868 659h4v1h-4zM876 659h5v1h-5zM884 659h2v1h-2zM887 659h27v1h-27zM915 659h9v1h-9zM928 659h3v1h-3zM936 659h3v1h-3zM291 660h1v1h-1zM326 660h3v1h-3zM365 660h3v1h-3zM373 660h9v1h-9zM384 660h3v1h-3zM389 660h5v1h-5zM398 660h5v1h-5zM405 660h4v1h-4zM411 660h1v1h-1zM424 660h5v1h-5zM433 660h1v1h-1zM481 660h3v1h-3zM495 660h5v1h-5zM502 660h1v1h-1zM507 660h6v1h-6zM514 660h38v1h-38zM554 660h3v1h-3zM558 660h260v1h-260zM819 660h9v1h-9zM830 660h14v1h-14zM845 660h2v1h-2zM849 660h1v1h-1zM851 660h1v1h-1zM853 660h1v1h-1zM860 660h1v1h-1zM862 660h1v1h-1zM870 660h1v1h-1zM877 660h3v1h-3zM888 660h19v1h-19zM908 660h3v1h-3zM912 660h1v1h-1zM916 660h9v1h-9zM929 660h1v1h-1zM935 660h5v1h-5zM290 661h3v1h-3zM325 661h5v1h-5zM363 661h6v1h-6zM370 661h2v1h-2zM374 661h14v1h-14zM389 661h6v1h-6zM397 661h5v1h-5zM403 661h6v1h-6zM410 661h3v1h-3zM414 661h1v1h-1zM425 661h3v1h-3zM432 661h3v1h-3zM480 661h5v1h-5zM491 661h1v1h-1zM495 661h9v1h-9zM505 661h303v1h-303zM809 661h3v1h-3zM814 661h3v1h-3zM820 661h7v1h-7zM831 661h3v1h-3zM835 661h8v1h-8zM878 661h1v1h-1zM889 661h6v1h-6zM896 661h10v1h-10zM909 661h1v1h-1zM918 661h6v1h-6zM936 661h3v1h-3zM289 662h5v1h-5zM308 662h1v1h-1zM326 662h3v1h-3zM362 662h54v1h-54zM419 662h1v1h-1zM423 662h1v1h-1zM426 662h1v1h-1zM429 662h1v1h-1zM431 662h5v1h-5zM476 662h1v1h-1zM481 662h3v1h-3zM490 662h3v1h-3zM494 662h299v1h-299zM795 662h3v1h-3zM799 662h9v1h-9zM810 662h1v1h-1zM815 662h1v1h-1zM821 662h1v1h-1zM823 662h3v1h-3zM830 662h12v1h-12zM890 662h3v1h-3zM897 662h1v1h-1zM899 662h1v1h-1zM902 662h1v1h-1zM919 662h1v1h-1zM922 662h1v1h-1zM931 662h1v1h-1zM937 662h1v1h-1zM290 663h3v1h-3zM306 663h4v1h-4zM327 663h1v1h-1zM360 663h57v1h-57zM418 663h3v1h-3zM422 663h3v1h-3zM428 663h3v1h-3zM432 663h3v1h-3zM436 663h2v1h-2zM443 663h1v1h-1zM453 663h1v1h-1zM475 663h3v1h-3zM482 663h1v1h-1zM489 663h294v1h-294zM784 663h8v1h-8zM796 663h1v1h-1zM800 663h3v1h-3zM804 663h3v1h-3zM824 663h1v1h-1zM831 663h3v1h-3zM836 663h3v1h-3zM891 663h1v1h-1zM930 663h3v1h-3zM285 664h1v1h-1zM290 664h2v1h-2zM293 664h2v1h-2zM300 664h1v1h-1zM305 664h6v1h-6zM353 664h1v1h-1zM357 664h1v1h-1zM359 664h51v1h-51zM411 664h15v1h-15zM427 664h12v1h-12zM441 664h4v1h-4zM452 664h3v1h-3zM458 664h1v1h-1zM474 664h6v1h-6zM487 664h265v1h-265zM755 664h5v1h-5zM761 664h21v1h-21zM785 664h4v1h-4zM790 664h1v1h-1zM801 664h1v1h-1zM805 664h1v1h-1zM832 664h1v1h-1zM837 664h1v1h-1zM929 664h5v1h-5zM274 665h1v1h-1zM282 665h5v1h-5zM288 665h8v1h-8zM299 665h3v1h-3zM304 665h8v1h-8zM322 665h1v1h-1zM352 665h75v1h-75zM428 665h19v1h-19zM450 665h6v1h-6zM457 665h3v1h-3zM467 665h1v1h-1zM473 665h8v1h-8zM484 665h207v1h-207zM692 665h17v1h-17zM711 665h38v1h-38zM750 665h1v1h-1zM756 665h3v1h-3zM762 665h8v1h-8zM771 665h8v1h-8zM780 665h1v1h-1zM784 665h5v1h-5zM850 665h1v1h-1zM930 665h3v1h-3zM273 666h3v1h-3zM281 666h16v1h-16zM298 666h5v1h-5zM305 666h6v1h-6zM314 666h1v1h-1zM321 666h3v1h-3zM332 666h2v1h-2zM342 666h1v1h-1zM351 666h97v1h-97zM449 666h13v1h-13zM466 666h3v1h-3zM472 666h10v1h-10zM483 666h117v1h-117zM601 666h12v1h-12zM614 666h10v1h-10zM625 666h60v1h-60zM687 666h3v1h-3zM694 666h1v1h-1zM697 666h3v1h-3zM701 666h1v1h-1zM703 666h1v1h-1zM707 666h1v1h-1zM712 666h10v1h-10zM723 666h6v1h-6zM730 666h3v1h-3zM734 666h10v1h-10zM745 666h1v1h-1zM747 666h1v1h-1zM757 666h1v1h-1zM765 666h4v1h-4zM772 666h5v1h-5zM785 666h3v1h-3zM849 666h3v1h-3zM931 666h1v1h-1zM272 667h5v1h-5zM279 667h25v1h-25zM305 667h6v1h-6zM312 667h4v1h-4zM320 667h6v1h-6zM331 667h5v1h-5zM341 667h3v1h-3zM350 667h113v1h-113zM465 667h5v1h-5zM471 667h122v1h-122zM594 667h4v1h-4zM600 667h11v1h-11zM613 667h9v1h-9zM626 667h10v1h-10zM637 667h14v1h-14zM652 667h1v1h-1zM654 667h31v1h-31zM688 667h1v1h-1zM698 667h1v1h-1zM708 667h2v1h-2zM711 667h7v1h-7zM720 667h1v1h-1zM724 667h4v1h-4zM731 667h1v1h-1zM735 667h1v1h-1zM737 667h8v1h-8zM766 667h2v1h-2zM775 667h1v1h-1zM786 667h1v1h-1zM848 667h5v1h-5zM273 668h3v1h-3zM278 668h39v1h-39zM319 668h1v1h-1zM321 668h6v1h-6zM330 668h7v1h-7zM339 668h6v1h-6zM347 668h1v1h-1zM349 668h104v1h-104zM454 668h123v1h-123zM578 668h1v1h-1zM580 668h1v1h-1zM582 668h17v1h-17zM601 668h10v1h-10zM614 668h4v1h-4zM619 668h1v1h-1zM627 668h1v1h-1zM630 668h7v1h-7zM638 668h3v1h-3zM642 668h10v1h-10zM654 668h7v1h-7zM662 668h22v1h-22zM691 668h1v1h-1zM707 668h4v1h-4zM712 668h4v1h-4zM726 668h1v1h-1zM738 668h2v1h-2zM741 668h3v1h-3zM780 668h1v1h-1zM849 668h3v1h-3zM268 669h1v1h-1zM274 669h1v1h-1zM276 669h45v1h-45zM322 669h254v1h-254zM583 669h10v1h-10zM595 669h3v1h-3zM602 669h10v1h-10zM614 669h5v1h-5zM631 669h1v1h-1zM633 669h3v1h-3zM639 669h1v1h-1zM642 669h5v1h-5zM648 669h3v1h-3zM653 669h6v1h-6zM662 669h11v1h-11zM675 669h8v1h-8zM690 669h3v1h-3zM706 669h6v1h-6zM713 669h1v1h-1zM742 669h1v1h-1zM779 669h3v1h-3zM850 669h1v1h-1zM264 670h1v1h-1zM267 670h3v1h-3zM272 670h1v1h-1zM275 670h289v1h-289zM565 670h11v1h-11zM584 670h1v1h-1zM587 670h3v1h-3zM591 670h1v1h-1zM596 670h1v1h-1zM603 670h3v1h-3zM608 670h3v1h-3zM615 670h3v1h-3zM634 670h1v1h-1zM643 670h3v1h-3zM649 670h1v1h-1zM652 670h7v1h-7zM661 670h11v1h-11zM676 670h6v1h-6zM689 670h5v1h-5zM707 670h4v1h-4zM778 670h5v1h-5zM263 671h127v1h-127zM391 671h132v1h-132zM525 671h3v1h-3zM529 671h3v1h-3zM534 671h29v1h-29zM565 671h10v1h-10zM588 671h1v1h-1zM604 671h1v1h-1zM609 671h1v1h-1zM616 671h1v1h-1zM644 671h1v1h-1zM653 671h12v1h-12zM667 671h1v1h-1zM670 671h1v1h-1zM677 671h1v1h-1zM679 671h1v1h-1zM688 671h5v1h-5zM708 671h2v1h-2zM779 671h3v1h-3zM262 672h128v1h-128zM392 672h1v1h-1zM394 672h106v1h-106zM501 672h23v1h-23zM525 672h3v1h-3zM530 672h1v1h-1zM537 672h1v1h-1zM539 672h5v1h-5zM545 672h1v1h-1zM547 672h1v1h-1zM550 672h11v1h-11zM566 672h3v1h-3zM571 672h1v1h-1zM573 672h1v1h-1zM654 672h1v1h-1zM656 672h3v1h-3zM661 672h3v1h-3zM673 672h1v1h-1zM687 672h5v1h-5zM759 672h1v1h-1zM780 672h1v1h-1zM263 673h4v1h-4zM268 673h107v1h-107zM377 673h4v1h-4zM382 673h9v1h-9zM394 673h58v1h-58zM453 673h44v1h-44zM498 673h1v1h-1zM503 673h5v1h-5zM509 673h5v1h-5zM515 673h3v1h-3zM520 673h3v1h-3zM524 673h5v1h-5zM539 673h4v1h-4zM551 673h5v1h-5zM557 673h3v1h-3zM565 673h1v1h-1zM567 673h1v1h-1zM657 673h1v1h-1zM662 673h1v1h-1zM672 673h3v1h-3zM686 673h5v1h-5zM758 673h3v1h-3zM262 674h108v1h-108zM371 674h5v1h-5zM377 674h13v1h-13zM394 674h6v1h-6zM401 674h4v1h-4zM406 674h2v1h-2zM409 674h6v1h-6zM416 674h79v1h-79zM504 674h5v1h-5zM510 674h3v1h-3zM516 674h1v1h-1zM519 674h5v1h-5zM525 674h3v1h-3zM538 674h5v1h-5zM552 674h3v1h-3zM558 674h1v1h-1zM564 674h3v1h-3zM570 674h1v1h-1zM621 674h1v1h-1zM671 674h5v1h-5zM687 674h3v1h-3zM757 674h5v1h-5zM262 675h99v1h-99zM363 675h1v1h-1zM366 675h3v1h-3zM372 675h3v1h-3zM378 675h3v1h-3zM383 675h3v1h-3zM388 675h1v1h-1zM395 675h4v1h-4zM402 675h1v1h-1zM409 675h5v1h-5zM417 675h13v1h-13zM431 675h57v1h-57zM490 675h4v1h-4zM505 675h3v1h-3zM511 675h1v1h-1zM520 675h3v1h-3zM526 675h1v1h-1zM539 675h3v1h-3zM563 675h5v1h-5zM569 675h3v1h-3zM620 675h3v1h-3zM672 675h3v1h-3zM688 675h1v1h-1zM758 675h3v1h-3zM262 676h98v1h-98zM367 676h1v1h-1zM373 676h1v1h-1zM377 676h5v1h-5zM384 676h1v1h-1zM396 676h1v1h-1zM408 676h5v1h-5zM418 676h68v1h-68zM491 676h1v1h-1zM506 676h1v1h-1zM521 676h1v1h-1zM540 676h1v1h-1zM564 676h3v1h-3zM568 676h5v1h-5zM619 676h5v1h-5zM673 676h1v1h-1zM759 676h1v1h-1zM262 677h28v1h-28zM292 677h65v1h-65zM358 677h1v1h-1zM378 677h3v1h-3zM409 677h3v1h-3zM419 677h2v1h-2zM423 677h48v1h-48zM473 677h12v1h-12zM507 677h1v1h-1zM565 677h1v1h-1zM569 677h3v1h-3zM620 677h3v1h-3zM262 678h19v1h-19zM282 678h8v1h-8zM292 678h14v1h-14zM307 678h1v1h-1zM309 678h40v1h-40zM351 678h6v1h-6zM379 678h1v1h-1zM410 678h1v1h-1zM424 678h1v1h-1zM427 678h3v1h-3zM432 678h36v1h-36zM469 678h1v1h-1zM474 678h10v1h-10zM506 678h3v1h-3zM570 678h1v1h-1zM576 678h1v1h-1zM621 678h1v1h-1zM262 679h28v1h-28zM293 679h5v1h-5zM299 679h6v1h-6zM308 679h41v1h-41zM353 679h3v1h-3zM426 679h5v1h-5zM435 679h1v1h-1zM438 679h30v1h-30zM474 679h9v1h-9zM505 679h5v1h-5zM575 679h3v1h-3zM628 679h1v1h-1zM262 680h27v1h-27zM294 680h1v1h-1zM296 680h1v1h-1zM300 680h5v1h-5zM307 680h41v1h-41zM354 680h1v1h-1zM427 680h3v1h-3zM434 680h3v1h-3zM439 680h1v1h-1zM441 680h1v1h-1zM444 680h1v1h-1zM446 680h16v1h-16zM464 680h3v1h-3zM475 680h6v1h-6zM506 680h3v1h-3zM574 680h5v1h-5zM627 680h3v1h-3zM720 680h1v1h-1zM262 681h20v1h-20zM283 681h1v1h-1zM287 681h1v1h-1zM301 681h3v1h-3zM306 681h13v1h-13zM320 681h3v1h-3zM325 681h11v1h-11zM337 681h4v1h-4zM343 681h4v1h-4zM428 681h1v1h-1zM433 681h5v1h-5zM445 681h5v1h-5zM456 681h1v1h-1zM459 681h2v1h-2zM465 681h1v1h-1zM476 681h1v1h-1zM478 681h1v1h-1zM507 681h2v1h-2zM575 681h3v1h-3zM626 681h5v1h-5zM719 681h3v1h-3zM262 682h17v1h-17zM280 682h1v1h-1zM302 682h1v1h-1zM307 682h3v1h-3zM313 682h7v1h-7zM321 682h1v1h-1zM326 682h4v1h-4zM331 682h2v1h-2zM334 682h1v1h-1zM336 682h5v1h-5zM342 682h1v1h-1zM344 682h1v1h-1zM434 682h3v1h-3zM444 682h5v1h-5zM507 682h3v1h-3zM545 682h1v1h-1zM576 682h1v1h-1zM627 682h3v1h-3zM718 682h5v1h-5zM262 683h10v1h-10zM274 683h3v1h-3zM308 683h1v1h-1zM316 683h3v1h-3zM328 683h1v1h-1zM337 683h3v1h-3zM341 683h3v1h-3zM435 683h1v1h-1zM445 683h3v1h-3zM506 683h5v1h-5zM544 683h3v1h-3zM628 683h1v1h-1zM719 683h3v1h-3zM262 684h11v1h-11zM275 684h1v1h-1zM317 684h1v1h-1zM338 684h1v1h-1zM340 684h5v1h-5zM446 684h1v1h-1zM507 684h3v1h-3zM543 684h5v1h-5zM720 684h1v1h-1zM262 685h2v1h-2zM265 685h1v1h-1zM268 685h4v1h-4zM341 685h3v1h-3zM507 685h3v1h-3zM544 685h3v1h-3zM262 686h1v1h-1zM270 686h1v1h-1zM342 686h1v1h-1zM506 686h5v1h-5zM545 686h1v1h-1zM438 687h1v1h-1zM507 687h3v1h-3zM322 688h1v1h-1zM437 688h3v1h-3zM508 688h1v1h-1zM321 689h3v1h-3zM436 689h5v1h-5zM320 690h6v1h-6zM437 690h3v1h-3zM321 691h6v1h-6zM438 691h1v1h-1zM322 692h6v1h-6zM324 693h3v1h-3zM325 694h1v1h-1zM825 766h1v1h-1zM824 767h3v1h-3zM823 768h5v1h-5zM824 769h3v1h-3zM825 770h1v1h-1z" fill="#007f00" shape-rendering="crispEdges"/>
<path d="M800.5 629v21M850.5 637v3" stroke="#c8203c" stroke-width="1"/>
<rect x="262.5" y="153.5" width="680" height="175" fill="none" stroke="#000" stroke-width="1"/>
<path d="M262 162.9h4M943 162.9h-4M262 195.1h4M943 195.1h-4M262 227.3h4M943 227.3h-4M262 259.5h4M943 259.5h-4M262 291.6h4M943 291.6h-4M262 323.8h4M943 323.8h-4M262 179.0h2M943 179.0h-2M262 211.2h2M943 211.2h-2M262 243.4h2M943 243.4h-2M262 275.6h2M943 275.6h-2M262 307.7h2M943 307.7h-2M324.5 329v-4M324.5 153v4M293.5 329v-2M293.5 153v2M386.5 329v-4M386.5 153v4M355.5 329v-2M355.5 153v2M447.5 329v-4M447.5 153v4M417.5 329v-2M417.5 153v2M509.5 329v-4M509.5 153v4M478.5 329v-2M478.5 153v2M571.5 329v-4M571.5 153v4M540.5 329v-2M540.5 153v2M633.5 329v-4M633.5 153v4M602.5 329v-2M602.5 153v2M695.5 329v-4M695.5 153v4M664.5 329v-2M664.5 153v2M757.5 329v-4M757.5 153v4M726.5 329v-2M726.5 153v2M818.5 329v-4M818.5 153v4M787.5 329v-2M787.5 153v2M880.5 329v-4M880.5 153v4M849.5 329v-2M849.5 153v2M911.5 329v-2M911.5 153v2" stroke="#000" stroke-width="1" fill="none"/>
<text x="259.8" y="167.2" text-anchor="end" letter-spacing="0.6">0.1</text>
<text x="259.8" y="199.4" text-anchor="end" letter-spacing="0.6">0.05</text>
<text x="259.8" y="231.6" text-anchor="end" letter-spacing="0.6">0</text>
<text x="259.8" y="263.8" text-anchor="end" letter-spacing="0.6">-0.05</text>
<text x="259.8" y="295.9" text-anchor="end" letter-spacing="0.6">-0.1</text>
<text x="259.8" y="328.1" text-anchor="end" letter-spacing="0.6">-0.15</text>
<text x="323.8" y="345.8" text-anchor="middle">2002</text>
<text x="385.6" y="345.8" text-anchor="middle">2003</text>
<text x="447.5" y="345.8" text-anchor="middle">2004</text>
<text x="509.3" y="345.8" text-anchor="middle">2005</text>
<text x="571.1" y="345.8" text-anchor="middle">2006</text>
<text x="632.9" y="345.8" text-anchor="middle">2007</text>
<text x="694.7" y="345.8" text-anchor="middle">2008</text>
<text x="756.5" y="345.8" text-anchor="middle">2009</text>
<text x="818.4" y="345.8" text-anchor="middle">2010</text>
<text x="880.2" y="345.8" text-anchor="middle">2011</text>
<text x="942.5" y="146.7" text-anchor="end" font-weight="bold" font-size="12.5">ALGO North offset</text>
<rect x="262.5" y="381.5" width="680" height="174" fill="none" stroke="#000" stroke-width="1"/>
<path d="M262 390.2h4M943 390.2h-4M262 422.4h4M943 422.4h-4M262 454.6h4M943 454.6h-4M262 486.8h4M943 486.8h-4M262 518.9h4M943 518.9h-4M262 551.1h4M943 551.1h-4M262 406.3h2M943 406.3h-2M262 438.5h2M943 438.5h-2M262 470.7h2M943 470.7h-2M262 502.9h2M943 502.9h-2M262 535.0h2M943 535.0h-2M324.5 556v-4M324.5 381v4M293.5 556v-2M293.5 381v2M386.5 556v-4M386.5 381v4M355.5 556v-2M355.5 381v2M447.5 556v-4M447.5 381v4M417.5 556v-2M417.5 381v2M509.5 556v-4M509.5 381v4M478.5 556v-2M478.5 381v2M571.5 556v-4M571.5 381v4M540.5 556v-2M540.5 381v2M633.5 556v-4M633.5 381v4M602.5 556v-2M602.5 381v2M695.5 556v-4M695.5 381v4M664.5 556v-2M664.5 381v2M757.5 556v-4M757.5 381v4M726.5 556v-2M726.5 381v2M818.5 556v-4M818.5 381v4M787.5 556v-2M787.5 381v2M880.5 556v-4M880.5 381v4M849.5 556v-2M849.5 381v2M911.5 556v-2M911.5 381v2" stroke="#000" stroke-width="1" fill="none"/>
<text x="259.8" y="394.5" text-anchor="end" letter-spacing="0.6">0.1</text>
<text x="259.8" y="426.7" text-anchor="end" letter-spacing="0.6">0.05</text>
<text x="259.8" y="458.9" text-anchor="end" letter-spacing="0.6">0</text>
<text x="259.8" y="491.1" text-anchor="end" letter-spacing="0.6">-0.05</text>
<text x="259.8" y="523.2" text-anchor="end" letter-spacing="0.6">-0.1</text>
<text x="259.8" y="555.4" text-anchor="end" letter-spacing="0.6">-0.15</text>
<text x="323.8" y="572.8" text-anchor="middle">2002</text>
<text x="385.6" y="572.8" text-anchor="middle">2003</text>
<text x="447.5" y="572.8" text-anchor="middle">2004</text>
<text x="509.3" y="572.8" text-anchor="middle">2005</text>
<text x="571.1" y="572.8" text-anchor="middle">2006</text>
<text x="632.9" y="572.8" text-anchor="middle">2007</text>
<text x="694.7" y="572.8" text-anchor="middle">2008</text>
<text x="756.5" y="572.8" text-anchor="middle">2009</text>
<text x="818.4" y="572.8" text-anchor="middle">2010</text>
<text x="880.2" y="572.8" text-anchor="middle">2011</text>
<text x="942.5" y="374.7" text-anchor="end" font-weight="bold" font-size="12.5">ALGO East offset</text>
<rect x="262.5" y="608.5" width="680" height="174" fill="none" stroke="#000" stroke-width="1"/>
<path d="M262 627.8h4M943 627.8h-4M262 664.3h4M943 664.3h-4M262 700.8h4M943 700.8h-4M262 737.3h4M943 737.3h-4M262 773.8h4M943 773.8h-4M262 609.5h2M943 609.5h-2M262 646.0h2M943 646.0h-2M262 682.5h2M943 682.5h-2M262 719.0h2M943 719.0h-2M262 755.5h2M943 755.5h-2M324.5 783v-4M324.5 608v4M293.5 783v-2M293.5 608v2M386.5 783v-4M386.5 608v4M355.5 783v-2M355.5 608v2M447.5 783v-4M447.5 608v4M417.5 783v-2M417.5 608v2M509.5 783v-4M509.5 608v4M478.5 783v-2M478.5 608v2M571.5 783v-4M571.5 608v4M540.5 783v-2M540.5 608v2M633.5 783v-4M633.5 608v4M602.5 783v-2M602.5 608v2M695.5 783v-4M695.5 608v4M664.5 783v-2M664.5 608v2M757.5 783v-4M757.5 608v4M726.5 783v-2M726.5 608v2M818.5 783v-4M818.5 608v4M787.5 783v-2M787.5 608v2M880.5 783v-4M880.5 608v4M849.5 783v-2M849.5 608v2M911.5 783v-2M911.5 608v2" stroke="#000" stroke-width="1" fill="none"/>
<text x="259.8" y="632.1" text-anchor="end" letter-spacing="0.6">0.05</text>
<text x="259.8" y="668.6" text-anchor="end" letter-spacing="0.6">0</text>
<text x="259.8" y="705.1" text-anchor="end" letter-spacing="0.6">-0.05</text>
<text x="259.8" y="741.6" text-anchor="end" letter-spacing="0.6">-0.1</text>
<text x="259.8" y="778.1" text-anchor="end" letter-spacing="0.6">-0.15</text>
<text x="323.8" y="799.8" text-anchor="middle">2002</text>
<text x="385.6" y="799.8" text-anchor="middle">2003</text>
<text x="447.5" y="799.8" text-anchor="middle">2004</text>
<text x="509.3" y="799.8" text-anchor="middle">2005</text>
<text x="571.1" y="799.8" text-anchor="middle">2006</text>
<text x="632.9" y="799.8" text-anchor="middle">2007</text>
<text x="694.7" y="799.8" text-anchor="middle">2008</text>
<text x="756.5" y="799.8" text-anchor="middle">2009</text>
<text x="818.4" y="799.8" text-anchor="middle">2010</text>
<text x="880.2" y="799.8" text-anchor="middle">2011</text>
<text x="942.5" y="601.7" text-anchor="end" font-weight="bold" font-size="12.5">ALGO Up offset</text>
</svg>
<svg class="a" style="left:0;top:0;overflow:visible" width="1246" height="850">
<path d="M993 110 Q997 110 997 106 V91 Q997 87 1001 87 H1051 Q1055 87 1055 91 V106 Q1055 110 1059 110Z" fill="#b5b5b5"/>
<path d="M1000.5 87.5 H1052.5" stroke="#f2f2f2" fill="none"/>
<path d="M993.5 110 Q997.5 110 997.5 106 V91.5 Q997.5 87.5 1001.5 87.5" stroke="#f4f4f4" fill="none"/>
<path d="M1051.5 87.5 Q1055.5 87.5 1055.5 91.5 V106 Q1055.5 110 1059.5 110" stroke="#d8d8d8" fill="none"/>
</svg>
<div class="t" style="left:1019.00px;top:91.97px;font-size:13.5px;color:#000;">TS</div>
<div class="a" style="left:992px;top:110px;width:240px;height:336px;border-top:1px solid #707070;border-left:1px solid #707070;border-right:1px solid #fff;border-bottom:1px solid #fff"></div>
<div class="a" style="left:993px;top:111px;width:238px;height:334px;border-top:1px solid #fff;border-left:1px solid #fff;border-right:1px solid #707070;border-bottom:1px solid #707070"></div>
<div class="a" style="left:994px;top:112px;width:235px;height:332px;background:#fff;border-top:1px solid #6e6e6e;border-left:1px solid #6e6e6e"></div>
<div class="a" style="left:995px;top:113px;width:218px;height:315px;overflow:hidden;background:#fff">
<div class="a" style="left:0;top:0px;width:218px;height:18px;background:#fff;border-bottom:1px solid #e6e6e6"></div>
<div class="t" style="left:1px;top:1.7px;font-size:13px;letter-spacing:0.4px">Station name</div>
<div class="t" style="left:94px;top:1.7px;font-size:13px;letter-spacing:0.75px">ALGO</div>
<div class="a" style="left:0;top:18px;width:218px;height:18px;background:#f2f2f2;border-bottom:1px solid #e6e6e6"></div>
<div class="t" style="left:1px;top:19.7px;font-size:13px;letter-spacing:0.4px">No. of points</div>
<div class="t" style="left:94px;top:19.7px;font-size:13px;letter-spacing:0.75px">3897</div>
<div class="a" style="left:0;top:36px;width:218px;height:18px;background:#fff;border-bottom:1px solid #e6e6e6"></div>
<div class="t" style="left:1px;top:37.7px;font-size:13px;letter-spacing:0.4px">Mean coords.</div>
<div class="t" style="left:94px;top:37.7px;font-size:13px;letter-spacing:0.75px"></div>
<div class="a" style="left:0;top:54px;width:218px;height:18px;background:#f2f2f2;border-bottom:1px solid #e6e6e6"></div>
<div class="t" style="left:20px;top:55.7px;font-size:13px;letter-spacing:0.4px">North</div>
<div class="t" style="left:94px;top:55.7px;font-size:13px;letter-spacing:0.75px">&#8211;0.0000</div>
<div class="a" style="left:0;top:72px;width:218px;height:18px;background:#fff;border-bottom:1px solid #e6e6e6"></div>
<div class="t" style="left:20px;top:73.7px;font-size:13px;letter-spacing:0.4px">East</div>
<div class="t" style="left:94px;top:73.7px;font-size:13px;letter-spacing:0.75px">&#8211;0.0000</div>
<div class="a" style="left:0;top:90px;width:218px;height:18px;background:#f2f2f2;border-bottom:1px solid #e6e6e6"></div>
<div class="t" style="left:20px;top:91.7px;font-size:13px;letter-spacing:0.4px">Up</div>
<div class="t" style="left:94px;top:91.7px;font-size:13px;letter-spacing:0.75px">&#8211;0.0000</div>
<div class="a" style="left:0;top:108px;width:218px;height:18px;background:#fff;border-bottom:1px solid #e6e6e6"></div>
<div class="t" style="left:1px;top:109.7px;font-size:13px;letter-spacing:0.4px">Standard dev.</div>
<div class="t" style="left:94px;top:109.7px;font-size:13px;letter-spacing:0.75px"></div>
<div class="a" style="left:0;top:126px;width:218px;height:18px;background:#f2f2f2;border-bottom:1px solid #e6e6e6"></div>
<div class="t" style="left:20px;top:127.7px;font-size:13px;letter-spacing:0.4px">North</div>
<div class="t" style="left:94px;top:127.7px;font-size:13px;letter-spacing:0.75px">0.007182</div>
<div class="a" style="left:0;top:144px;width:218px;height:18px;background:#fff;border-bottom:1px solid #e6e6e6"></div>
<div class="t" style="left:20px;top:145.7px;font-size:13px;letter-spacing:0.4px">East</div>
<div class="t" style="left:94px;top:145.7px;font-size:13px;letter-spacing:0.75px">0.051349</div>
<div class="a" style="left:0;top:162px;width:218px;height:18px;background:#f2f2f2;border-bottom:1px solid #e6e6e6"></div>
<div class="t" style="left:20px;top:163.7px;font-size:13px;letter-spacing:0.4px">Up</div>
<div class="t" style="left:94px;top:163.7px;font-size:13px;letter-spacing:0.75px">0.011824</div>
<div class="a" style="left:0;top:180px;width:218px;height:18px;background:#fff;border-bottom:1px solid #e6e6e6"></div>
<div class="t" style="left:1px;top:181.7px;font-size:13px;letter-spacing:0.4px">Max residuals</div>
<div class="t" style="left:94px;top:181.7px;font-size:13px;letter-spacing:0.75px"></div>
<div class="a" style="left:0;top:198px;width:218px;height:18px;background:#f2f2f2;border-bottom:1px solid #e6e6e6"></div>
<div class="t" style="left:20px;top:199.7px;font-size:13px;letter-spacing:0.4px">North</div>
<div class="t" style="left:94px;top:199.7px;font-size:13px;letter-spacing:0.75px">0.0137</div>
<div class="a" style="left:0;top:216px;width:218px;height:18px;background:#fff;border-bottom:1px solid #e6e6e6"></div>
<div class="t" style="left:20px;top:217.7px;font-size:13px;letter-spacing:0.4px">East</div>
<div class="t" style="left:94px;top:217.7px;font-size:13px;letter-spacing:0.75px">0.0145</div>
<div class="a" style="left:0;top:234px;width:218px;height:18px;background:#f2f2f2;border-bottom:1px solid #e6e6e6"></div>
<div class="t" style="left:20px;top:235.7px;font-size:13px;letter-spacing:0.4px">Up</div>
<div class="t" style="left:94px;top:235.7px;font-size:13px;letter-spacing:0.75px">0.0311</div>
<div class="a" style="left:0;top:252px;width:218px;height:18px;background:#fff;border-bottom:1px solid #e6e6e6"></div>
<div class="t" style="left:1px;top:253.7px;font-size:13px;letter-spacing:0.4px">Time span</div>
<div class="t" style="left:94px;top:253.7px;font-size:13px;letter-spacing:0.75px"></div>
<div class="a" style="left:0;top:270px;width:218px;height:18px;background:#f2f2f2;border-bottom:1px solid #e6e6e6"></div>
<div class="t" style="left:20px;top:271.7px;font-size:13px;letter-spacing:0.4px">From</div>
<div class="t" style="left:94px;top:271.7px;font-size:13px;letter-spacing:0.75px">2001.0014</div>
<div class="a" style="left:0;top:288px;width:218px;height:18px;background:#fff;border-bottom:1px solid #e6e6e6"></div>
<div class="t" style="left:20px;top:289.7px;font-size:13px;letter-spacing:0.4px">To</div>
<div class="t" style="left:94px;top:289.7px;font-size:13px;letter-spacing:0.75px">2011.9986</div>
<div class="a" style="left:0;top:306px;width:218px;height:18px;background:#f2f2f2;border-bottom:1px solid #e6e6e6"></div>
<div class="t" style="left:1px;top:307.7px;font-size:13px;letter-spacing:0.4px">No. of jumps</div>
<div class="t" style="left:94px;top:307.7px;font-size:13px;letter-spacing:0.75px">0</div>
<div class="a" style="left:92px;top:0;width:1px;height:315px;background:#e4e4e4"></div>
</div>
<div class="a" style="left:1214px;top:113px;width:15px;height:315px;background:#e8e7d8;border-left:1px solid #8c8c8c;border-right:1px solid #8c8c8c"></div>
<div class="a" style="left:1214px;top:113px;width:15px;height:15px;background:linear-gradient(90deg,#f6f6ef,#e4e3d5);border:1px solid #7a7a7a"></div>
<svg class="a" style="left:1214px;top:113px" width="15" height="15"><path d="M3.5 9.5 L7.5 5.5 L11.5 9.5Z" fill="#000"/></svg>
<div class="a" style="left:1214px;top:413px;width:15px;height:15px;background:linear-gradient(90deg,#f6f6ef,#e4e3d5);border:1px solid #7a7a7a"></div>
<svg class="a" style="left:1214px;top:413px" width="15" height="15"><path d="M3.5 6 L7.5 10 L11.5 6Z" fill="#000"/></svg>
<div class="a" style="left:1214px;top:128px;width:15px;height:198px;background:linear-gradient(90deg,#f4faff 0,#f4faff 1px,#d0d8e4 2px,#c8d4ec 50%,#bcc0d8);border-left:1px solid #4a6e94;border-right:1px solid #6e7284;border-bottom:1px solid #4a6e94"></div>
<svg class="a" style="left:1217px;top:215px" width="11" height="24"><rect x="0" y="0" width="1" height="1" fill="#6f86a8"/><rect x="2" y="0" width="1" height="1" fill="#6f86a8"/><rect x="4" y="0" width="1" height="1" fill="#6f86a8"/><rect x="6" y="0" width="1" height="1" fill="#6f86a8"/><rect x="8" y="0" width="1" height="1" fill="#6f86a8"/><rect x="1" y="2" width="1" height="1" fill="#6f86a8"/><rect x="3" y="2" width="1" height="1" fill="#6f86a8"/><rect x="5" y="2" width="1" height="1" fill="#6f86a8"/><rect x="7" y="2" width="1" height="1" fill="#6f86a8"/><rect x="9" y="2" width="1" height="1" fill="#6f86a8"/><rect x="0" y="4" width="1" height="1" fill="#6f86a8"/><rect x="2" y="4" width="1" height="1" fill="#6f86a8"/><rect x="4" y="4" width="1" height="1" fill="#6f86a8"/><rect x="6" y="4" width="1" height="1" fill="#6f86a8"/><rect x="8" y="4" width="1" height="1" fill="#6f86a8"/><rect x="1" y="6" width="1" height="1" fill="#6f86a8"/><rect x="3" y="6" width="1" height="1" fill="#6f86a8"/><rect x="5" y="6" width="1" height="1" fill="#6f86a8"/><rect x="7" y="6" width="1" height="1" fill="#6f86a8"/><rect x="9" y="6" width="1" height="1" fill="#6f86a8"/><rect x="0" y="8" width="1" height="1" fill="#6f86a8"/><rect x="2" y="8" width="1" height="1" fill="#6f86a8"/><rect x="4" y="8" width="1" height="1" fill="#6f86a8"/><rect x="6" y="8" width="1" height="1" fill="#6f86a8"/><rect x="8" y="8" width="1" height="1" fill="#6f86a8"/><rect x="1" y="10" width="1" height="1" fill="#6f86a8"/><rect x="3" y="10" width="1" height="1" fill="#6f86a8"/><rect x="5" y="10" width="1" height="1" fill="#6f86a8"/><rect x="7" y="10" width="1" height="1" fill="#6f86a8"/><rect x="9" y="10" width="1" height="1" fill="#6f86a8"/><rect x="0" y="12" width="1" height="1" fill="#6f86a8"/><rect x="2" y="12" width="1" height="1" fill="#6f86a8"/><rect x="4" y="12" width="1" height="1" fill="#6f86a8"/><rect x="6" y="12" width="1" height="1" fill="#6f86a8"/><rect x="8" y="12" width="1" height="1" fill="#6f86a8"/><rect x="1" y="14" width="1" height="1" fill="#6f86a8"/><rect x="3" y="14" width="1" height="1" fill="#6f86a8"/><rect x="5" y="14" width="1" height="1" fill="#6f86a8"/><rect x="7" y="14" width="1" height="1" fill="#6f86a8"/><rect x="9" y="14" width="1" height="1" fill="#6f86a8"/><rect x="0" y="16" width="1" height="1" fill="#6f86a8"/><rect x="2" y="16" width="1" height="1" fill="#6f86a8"/><rect x="4" y="16" width="1" height="1" fill="#6f86a8"/><rect x="6" y="16" width="1" height="1" fill="#6f86a8"/><rect x="8" y="16" width="1" height="1" fill="#6f86a8"/><rect x="1" y="18" width="1" height="1" fill="#6f86a8"/><rect x="3" y="18" width="1" height="1" fill="#6f86a8"/><rect x="5" y="18" width="1" height="1" fill="#6f86a8"/><rect x="7" y="18" width="1" height="1" fill="#6f86a8"/><rect x="9" y="18" width="1" height="1" fill="#6f86a8"/><rect x="0" y="20" width="1" height="1" fill="#6f86a8"/><rect x="2" y="20" width="1" height="1" fill="#6f86a8"/><rect x="4" y="20" width="1" height="1" fill="#6f86a8"/><rect x="6" y="20" width="1" height="1" fill="#6f86a8"/><rect x="8" y="20" width="1" height="1" fill="#6f86a8"/><rect x="1" y="22" width="1" height="1" fill="#6f86a8"/><rect x="3" y="22" width="1" height="1" fill="#6f86a8"/><rect x="5" y="22" width="1" height="1" fill="#6f86a8"/><rect x="7" y="22" width="1" height="1" fill="#6f86a8"/><rect x="9" y="22" width="1" height="1" fill="#6f86a8"/></svg>
<div class="a" style="left:995px;top:428px;width:218px;height:15px;background:#e8e7d8;border-top:1px solid #8c8c8c;border-bottom:1px solid #8c8c8c"></div>
<div class="a" style="left:995px;top:428px;width:15px;height:15px;background:linear-gradient(#f6f6ef,#e4e3d5);border:1px solid #7a7a7a"></div>
<svg class="a" style="left:995px;top:428px" width="15" height="15"><path d="M9.5 3.5 L5.5 7.5 L9.5 11.5Z" fill="#000"/></svg>
<div class="a" style="left:1198px;top:428px;width:15px;height:15px;background:linear-gradient(#f6f6ef,#e4e3d5);border:1px solid #7a7a7a"></div>
<svg class="a" style="left:1198px;top:428px" width="15" height="15"><path d="M6 3.5 L10 7.5 L6 11.5Z" fill="#000"/></svg>
<div class="a" style="left:1010px;top:428px;width:175px;height:15px;background:linear-gradient(#f4faff 0,#f4faff 1px,#d0d8e4 2px,#c8d4ec 50%,#bcc0d8);border-top:1px solid #4a6e94;border-bottom:1px solid #6e7284;border-right:1px solid #4a6e94;border-left:1px solid #4a6e94"></div>
<svg class="a" style="left:1085px;top:431px" width="24" height="11"><rect x="0" y="0" width="1" height="1" fill="#6f86a8"/><rect x="2" y="0" width="1" height="1" fill="#6f86a8"/><rect x="4" y="0" width="1" height="1" fill="#6f86a8"/><rect x="6" y="0" width="1" height="1" fill="#6f86a8"/><rect x="8" y="0" width="1" height="1" fill="#6f86a8"/><rect x="10" y="0" width="1" height="1" fill="#6f86a8"/><rect x="12" y="0" width="1" height="1" fill="#6f86a8"/><rect x="14" y="0" width="1" height="1" fill="#6f86a8"/><rect x="16" y="0" width="1" height="1" fill="#6f86a8"/><rect x="18" y="0" width="1" height="1" fill="#6f86a8"/><rect x="20" y="0" width="1" height="1" fill="#6f86a8"/><rect x="22" y="0" width="1" height="1" fill="#6f86a8"/><rect x="1" y="2" width="1" height="1" fill="#6f86a8"/><rect x="3" y="2" width="1" height="1" fill="#6f86a8"/><rect x="5" y="2" width="1" height="1" fill="#6f86a8"/><rect x="7" y="2" width="1" height="1" fill="#6f86a8"/><rect x="9" y="2" width="1" height="1" fill="#6f86a8"/><rect x="11" y="2" width="1" height="1" fill="#6f86a8"/><rect x="13" y="2" width="1" height="1" fill="#6f86a8"/><rect x="15" y="2" width="1" height="1" fill="#6f86a8"/><rect x="17" y="2" width="1" height="1" fill="#6f86a8"/><rect x="19" y="2" width="1" height="1" fill="#6f86a8"/><rect x="21" y="2" width="1" height="1" fill="#6f86a8"/><rect x="23" y="2" width="1" height="1" fill="#6f86a8"/><rect x="0" y="4" width="1" height="1" fill="#6f86a8"/><rect x="2" y="4" width="1" height="1" fill="#6f86a8"/><rect x="4" y="4" width="1" height="1" fill="#6f86a8"/><rect x="6" y="4" width="1" height="1" fill="#6f86a8"/><rect x="8" y="4" width="1" height="1" fill="#6f86a8"/><rect x="10" y="4" width="1" height="1" fill="#6f86a8"/><rect x="12" y="4" width="1" height="1" fill="#6f86a8"/><rect x="14" y="4" width="1" height="1" fill="#6f86a8"/><rect x="16" y="4" width="1" height="1" fill="#6f86a8"/><rect x="18" y="4" width="1" height="1" fill="#6f86a8"/><rect x="20" y="4" width="1" height="1" fill="#6f86a8"/><rect x="22" y="4" width="1" height="1" fill="#6f86a8"/><rect x="1" y="6" width="1" height="1" fill="#6f86a8"/><rect x="3" y="6" width="1" height="1" fill="#6f86a8"/><rect x="5" y="6" width="1" height="1" fill="#6f86a8"/><rect x="7" y="6" width="1" height="1" fill="#6f86a8"/><rect x="9" y="6" width="1" height="1" fill="#6f86a8"/><rect x="11" y="6" width="1" height="1" fill="#6f86a8"/><rect x="13" y="6" width="1" height="1" fill="#6f86a8"/><rect x="15" y="6" width="1" height="1" fill="#6f86a8"/><rect x="17" y="6" width="1" height="1" fill="#6f86a8"/><rect x="19" y="6" width="1" height="1" fill="#6f86a8"/><rect x="21" y="6" width="1" height="1" fill="#6f86a8"/><rect x="23" y="6" width="1" height="1" fill="#6f86a8"/><rect x="0" y="8" width="1" height="1" fill="#6f86a8"/><rect x="2" y="8" width="1" height="1" fill="#6f86a8"/><rect x="4" y="8" width="1" height="1" fill="#6f86a8"/><rect x="6" y="8" width="1" height="1" fill="#6f86a8"/><rect x="8" y="8" width="1" height="1" fill="#6f86a8"/><rect x="10" y="8" width="1" height="1" fill="#6f86a8"/><rect x="12" y="8" width="1" height="1" fill="#6f86a8"/><rect x="14" y="8" width="1" height="1" fill="#6f86a8"/><rect x="16" y="8" width="1" height="1" fill="#6f86a8"/><rect x="18" y="8" width="1" height="1" fill="#6f86a8"/><rect x="20" y="8" width="1" height="1" fill="#6f86a8"/><rect x="22" y="8" width="1" height="1" fill="#6f86a8"/></svg>
<div class="a" style="left:1213px;top:428px;width:16px;height:16px;background:#e8e7d8"></div>
<svg class="a" style="left:0;top:0;overflow:visible" width="1246" height="850">
<path d="M993 480 Q997 480 997 476 V461 Q997 457 1001 457 H1051 Q1055 457 1055 461 V476 Q1055 480 1059 480Z" fill="#b5b5b5"/>
<path d="M1051 480 Q1055 480 1055 476 V461 Q1055 457 1059 457 H1109 Q1113 457 1113 461 V476 Q1113 480 1117 480Z" fill="#a6a6a6"/>
<path d="M1109 480 Q1113 480 1113 476 V461 Q1113 457 1117 457 H1167 Q1171 457 1171 461 V476 Q1171 480 1175 480Z" fill="#a6a6a6"/>
<path d="M1000.5 457.5 H1052.5" stroke="#f2f2f2" fill="none"/>
<path d="M993.5 480 Q997.5 480 997.5 476 V461.5 Q997.5 457.5 1001.5 457.5" stroke="#f4f4f4" fill="none"/>
<path d="M1051.5 457.5 Q1055.5 457.5 1055.5 461.5 V476 Q1055.5 480 1059.5 480" stroke="#444" fill="none"/>
<path d="M1058.5 457.5 H1110.5" stroke="#f2f2f2" fill="none"/>
<path d="M1056.5 461.5 V476" stroke="#c4c4c4" fill="none"/>
<path d="M1109.5 457.5 Q1113.5 457.5 1113.5 461.5 V476 Q1113.5 480 1117.5 480" stroke="#444" fill="none"/>
<path d="M1116.5 457.5 H1168.5" stroke="#f2f2f2" fill="none"/>
<path d="M1114.5 461.5 V476" stroke="#c4c4c4" fill="none"/>
<path d="M1167.5 457.5 Q1171.5 457.5 1171.5 461.5 V476 Q1171.5 480 1175.5 480" stroke="#444" fill="none"/>
</svg>
<div class="t" style="left:1008.70px;top:461.97px;font-size:13.5px;color:#000;letter-spacing:0.499px;">North</div>
<div class="t" style="left:1071.30px;top:461.97px;font-size:13.5px;color:#4a4a4a;letter-spacing:-0.621px;">East</div>
<div class="t" style="left:1133.00px;top:461.97px;font-size:13.5px;color:#4a4a4a;letter-spacing:0.251px;">Up</div>
<div class="a" style="left:992px;top:481px;width:240px;height:331px;border-top:1px solid #707070;border-left:1px solid #707070;border-right:1px solid #fff;border-bottom:1px solid #fff"></div>
<div class="a" style="left:993px;top:482px;width:238px;height:329px;border-top:1px solid #fff;border-left:1px solid #fff;border-right:1px solid #707070;border-bottom:1px solid #707070"></div>
<div class="a" style="left:994px;top:483px;width:235px;height:327px;background:#eae9d9"></div>
<div class="a" style="left:994px;top:483px;width:235px;height:18px;background:#ecebdc;border-bottom:1px solid #6e6e6e"></div>
<div class="a" style="left:1087px;top:483px;width:1px;height:18px;background:#6e6e6e"></div>
<div class="t" style="left:1026.40px;top:485.50px;font-size:13px;color:#000;letter-spacing:-0.505px;">Point</div>
<div class="t" style="left:1142.00px;top:485.50px;font-size:13px;color:#000;letter-spacing:-0.264px;">Value</div>
<div class="a" style="left:995px;top:794px;width:233px;height:15px;background:#e8e7d8;border-top:1px solid #8c8c8c;border-bottom:1px solid #8c8c8c"></div>
<div class="a" style="left:995px;top:794px;width:15px;height:15px;background:linear-gradient(#f6f6ef,#e4e3d5);border:1px solid #7a7a7a"></div>
<svg class="a" style="left:995px;top:794px" width="15" height="15"><path d="M9.5 3.5 L5.5 7.5 L9.5 11.5Z" fill="#000"/></svg>
<div class="a" style="left:1213px;top:794px;width:15px;height:15px;background:linear-gradient(#f6f6ef,#e4e3d5);border:1px solid #7a7a7a"></div>
<svg class="a" style="left:1213px;top:794px" width="15" height="15"><path d="M6 3.5 L10 7.5 L6 11.5Z" fill="#000"/></svg>
<div class="a" style="left:1010px;top:794px;width:203px;height:15px;background:linear-gradient(#f4faff 0,#f4faff 1px,#d0d8e4 2px,#c8d4ec 50%,#bcc0d8);border-top:1px solid #4a6e94;border-bottom:1px solid #6e7284;border-right:1px solid #4a6e94;border-left:1px solid #4a6e94"></div>
<svg class="a" style="left:1099px;top:797px" width="24" height="11"><rect x="0" y="0" width="1" height="1" fill="#6f86a8"/><rect x="2" y="0" width="1" height="1" fill="#6f86a8"/><rect x="4" y="0" width="1" height="1" fill="#6f86a8"/><rect x="6" y="0" width="1" height="1" fill="#6f86a8"/><rect x="8" y="0" width="1" height="1" fill="#6f86a8"/><rect x="10" y="0" width="1" height="1" fill="#6f86a8"/><rect x="12" y="0" width="1" height="1" fill="#6f86a8"/><rect x="14" y="0" width="1" height="1" fill="#6f86a8"/><rect x="16" y="0" width="1" height="1" fill="#6f86a8"/><rect x="18" y="0" width="1" height="1" fill="#6f86a8"/><rect x="20" y="0" width="1" height="1" fill="#6f86a8"/><rect x="22" y="0" width="1" height="1" fill="#6f86a8"/><rect x="1" y="2" width="1" height="1" fill="#6f86a8"/><rect x="3" y="2" width="1" height="1" fill="#6f86a8"/><rect x="5" y="2" width="1" height="1" fill="#6f86a8"/><rect x="7" y="2" width="1" height="1" fill="#6f86a8"/><rect x="9" y="2" width="1" height="1" fill="#6f86a8"/><rect x="11" y="2" width="1" height="1" fill="#6f86a8"/><rect x="13" y="2" width="1" height="1" fill="#6f86a8"/><rect x="15" y="2" width="1" height="1" fill="#6f86a8"/><rect x="17" y="2" width="1" height="1" fill="#6f86a8"/><rect x="19" y="2" width="1" height="1" fill="#6f86a8"/><rect x="21" y="2" width="1" height="1" fill="#6f86a8"/><rect x="23" y="2" width="1" height="1" fill="#6f86a8"/><rect x="0" y="4" width="1" height="1" fill="#6f86a8"/><rect x="2" y="4" width="1" height="1" fill="#6f86a8"/><rect x="4" y="4" width="1" height="1" fill="#6f86a8"/><rect x="6" y="4" width="1" height="1" fill="#6f86a8"/><rect x="8" y="4" width="1" height="1" fill="#6f86a8"/><rect x="10" y="4" width="1" height="1" fill="#6f86a8"/><rect x="12" y="4" width="1" height="1" fill="#6f86a8"/><rect x="14" y="4" width="1" height="1" fill="#6f86a8"/><rect x="16" y="4" width="1" height="1" fill="#6f86a8"/><rect x="18" y="4" width="1" height="1" fill="#6f86a8"/><rect x="20" y="4" width="1" height="1" fill="#6f86a8"/><rect x="22" y="4" width="1" height="1" fill="#6f86a8"/><rect x="1" y="6" width="1" height="1" fill="#6f86a8"/><rect x="3" y="6" width="1" height="1" fill="#6f86a8"/><rect x="5" y="6" width="1" height="1" fill="#6f86a8"/><rect x="7" y="6" width="1" height="1" fill="#6f86a8"/><rect x="9" y="6" width="1" height="1" fill="#6f86a8"/><rect x="11" y="6" width="1" height="1" fill="#6f86a8"/><rect x="13" y="6" width="1" height="1" fill="#6f86a8"/><rect x="15" y="6" width="1" height="1" fill="#6f86a8"/><rect x="17" y="6" width="1" height="1" fill="#6f86a8"/><rect x="19" y="6" width="1" height="1" fill="#6f86a8"/><rect x="21" y="6" width="1" height="1" fill="#6f86a8"/><rect x="23" y="6" width="1" height="1" fill="#6f86a8"/><rect x="0" y="8" width="1" height="1" fill="#6f86a8"/><rect x="2" y="8" width="1" height="1" fill="#6f86a8"/><rect x="4" y="8" width="1" height="1" fill="#6f86a8"/><rect x="6" y="8" width="1" height="1" fill="#6f86a8"/><rect x="8" y="8" width="1" height="1" fill="#6f86a8"/><rect x="10" y="8" width="1" height="1" fill="#6f86a8"/><rect x="12" y="8" width="1" height="1" fill="#6f86a8"/><rect x="14" y="8" width="1" height="1" fill="#6f86a8"/><rect x="16" y="8" width="1" height="1" fill="#6f86a8"/><rect x="18" y="8" width="1" height="1" fill="#6f86a8"/><rect x="20" y="8" width="1" height="1" fill="#6f86a8"/><rect x="22" y="8" width="1" height="1" fill="#6f86a8"/></svg>
<div class="a" style="left:3px;top:822px;width:1240px;height:1px;background:#fff"></div>
<div class="a" style="left:3px;top:821px;width:1240px;height:1px;background:#a9a9a9"></div>
<div class="a" style="left:12px;top:824px;width:300px;height:22px;border-top:1px solid #7a7a7a;border-left:1px solid #7a7a7a;border-right:1px solid #fff;border-bottom:1px solid #fff"></div>
<div class="a" style="left:314px;top:824px;width:75px;height:22px;border-top:1px solid #7a7a7a;border-left:1px solid #7a7a7a;border-right:1px solid #fff;border-bottom:1px solid #fff"></div>
<div class="a" style="left:391px;top:824px;width:251px;height:22px;border-top:1px solid #7a7a7a;border-left:1px solid #7a7a7a;border-right:1px solid #fff;border-bottom:1px solid #fff"></div>
<div class="a" style="left:643px;top:824px;width:54px;height:22px;border-top:1px solid #7a7a7a;border-left:1px solid #7a7a7a;border-right:1px solid #fff;border-bottom:1px solid #fff"></div>
<div class="a" style="left:699px;top:824px;width:120px;height:22px;border-top:1px solid #7a7a7a;border-left:1px solid #7a7a7a;border-right:1px solid #fff;border-bottom:1px solid #fff"></div>
<div class="t" style="left:16.00px;top:828.00px;font-size:13px;color:#000;letter-spacing:0.948px;">/home/ali/PhD/TS/proc03/gts (87 files)</div>
<div class="t" style="left:316.30px;top:828.00px;font-size:13px;color:#000;letter-spacing:-0.095px;">Ready</div>
<div class="t" style="left:396.80px;top:828.00px;font-size:13px;color:#000;letter-spacing:0.735px;">Position: 2010.7452, &#8211;0.1160</div>
<div class="t" style="left:645.00px;top:828.00px;font-size:13px;color:#8a8a8a;letter-spacing:0.332px;">PCT:4</div>
</body></html>
